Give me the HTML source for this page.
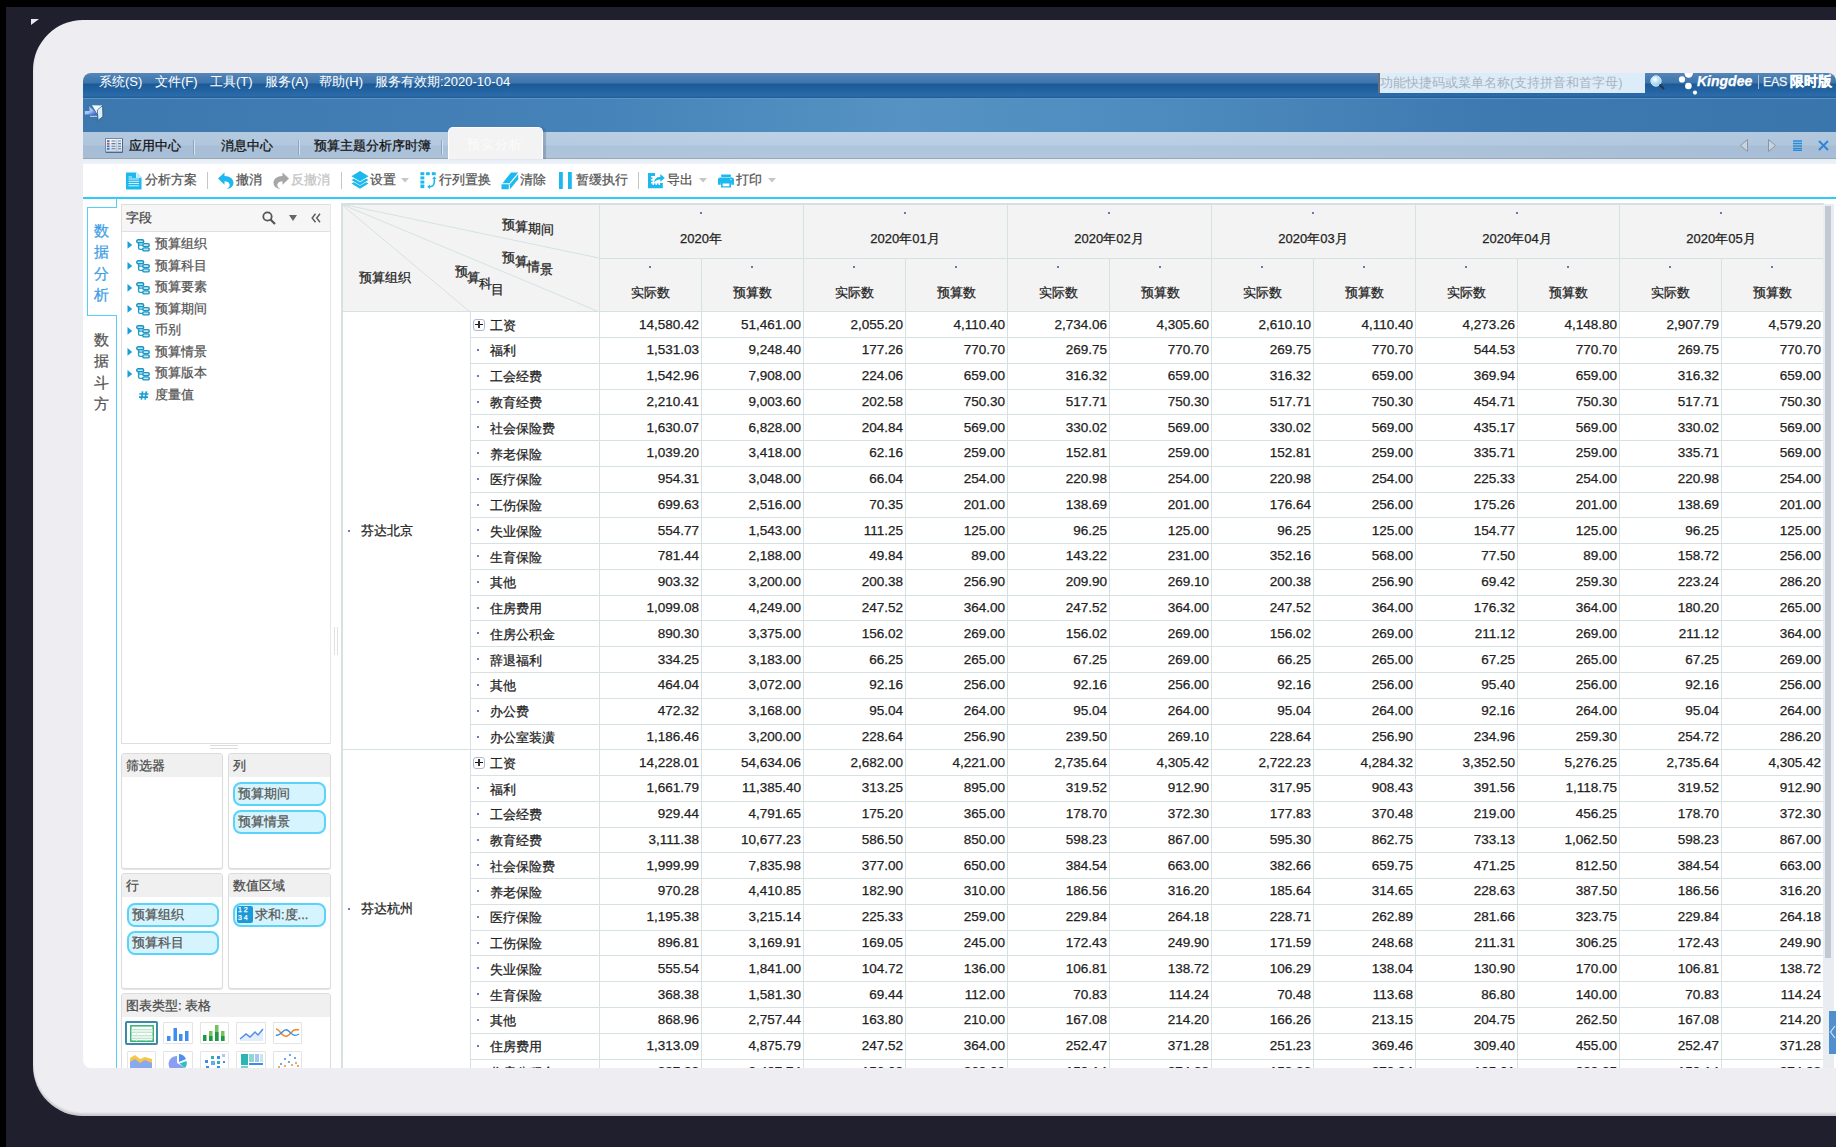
<!DOCTYPE html><html><head><meta charset="utf-8"><style>
*{margin:0;padding:0;box-sizing:border-box}
html,body{width:1836px;height:1147px;overflow:hidden;background:#1f1f2d;font-family:"Liberation Sans",sans-serif;-webkit-text-stroke:0.25px currentColor}
.abs{position:absolute}
#topblk{position:absolute;left:0;top:0;width:1836px;height:7px;background:#000}
#leftblk{position:absolute;left:0;top:0;width:6px;height:1147px;background:#000}
#panel{position:absolute;left:33px;top:20px;width:1900px;height:1095.5px;background:#eeedf2;border-radius:50px;box-shadow:inset 0 -2.5px 2px rgba(60,60,70,.2)}
#tri{position:absolute;left:31px;top:19px;width:0;height:0;border-top:6px solid #e8e8ee;border-right:8px solid transparent}
#app{position:absolute;left:83px;top:73px;width:1753px;height:995px;background:#fff;border-radius:8px 8px 0 8px;overflow:hidden}
#menubar{position:absolute;left:0;top:0;width:1800px;height:25px;background:linear-gradient(#5787b8 0px,#4a7eb2 4px,#3c74ac 10px,#1c5a96 11px,#2262a0 17px,#2c6cab 23px,#21609b 24px,#21609b 25px)}
#menubar .m{position:absolute;top:0px;-webkit-text-stroke:0;color:#fff;font-size:13px;line-height:17px;white-space:nowrap}
#mline{position:absolute;left:0;top:25px;width:1800px;height:1px;background:#5b93c3}
#bar2{position:absolute;left:0;top:26px;width:1753px;height:33px;background:linear-gradient(90deg,#3c77ad 0%,#4683b8 30%,#5693c4 47%,#4d8abe 62%,#3e7aaf 80%,#3a76ac 100%)}
#tabbar{position:absolute;left:0;top:59px;width:1753px;height:26px;background:linear-gradient(#bcd1e5 0,#b9cee3 13px,#afc5dc 14px,#b0c7dd 25px)}#tabbar:after{content:'';position:absolute;left:0;top:0;right:0;bottom:0;background:linear-gradient(90deg,rgba(60,90,130,.08),rgba(255,255,255,0) 40%,rgba(255,255,255,0) 60%,rgba(60,90,130,.08))}
#tabline{position:absolute;left:0;top:85px;width:1800px;height:1px;background:#9aa6b2}
#strip{position:absolute;left:0;top:86px;width:1800px;height:5px;background:linear-gradient(#e6edf5,#edf2f8)}
.tab{position:absolute;top:65px;font-size:13px;line-height:16px;color:#111;white-space:nowrap}
.tsep{position:absolute;top:67px;width:1px;height:15px;background:#8ea5bc;box-shadow:1px 0 0 #d5e2ee}
#acttab{position:absolute;left:365px;top:54px;width:95px;height:32px;background:#f3f3f3;border:1.5px solid #fff;border-bottom:none;border-radius:5px 5px 0 0;box-shadow:3px 0 1px rgba(70,90,120,.3)}
#acttab span{-webkit-text-stroke:0;position:absolute;left:17.5px;top:8.5px;font-size:13px;line-height:16px;color:#fbfbfb;letter-spacing:1px}
#toolbar{position:absolute;left:0;top:91px;width:1800px;height:33px;background:#fff}
.tb{position:absolute;top:8px;font-size:13px;line-height:16px;color:#555;white-space:nowrap}
.tbsep{position:absolute;top:8px;width:1px;height:17px;background:#bdbdbd}
#cyan{position:absolute;left:-1px;top:123.6px;width:1800px;height:2px;background:#2ccbfc}
</style></head><body>
<div id="topblk"></div><div id="leftblk"></div>
<div id="panel"></div><div id="tri"></div>
<div id="app">
<div id="menubar">
<div class="m" style="left:16px">系统(S)</div>
<div class="m" style="left:72px">文件(F)</div>
<div class="m" style="left:127px">工具(T)</div>
<div class="m" style="left:182px">服务(A)</div>
<div class="m" style="left:236px">帮助(H)</div>
<div class="m" style="left:292px">服务有效期:2020-10-04</div>
</div><div id="mline"></div><div id="bar2"></div>
<div id="tabbar"></div><div id="tabline"></div><div id="strip"></div>
<svg class="abs" style="left:22px;top:65px" width="18" height="15" viewBox="0 0 18 15"><defs><linearGradient id="tg" x1="0" y1="0" x2="0" y2="1"><stop offset="0" stop-color="#f4f8fd"/><stop offset="1" stop-color="#c9d9eb"/></linearGradient></defs><rect x="0.5" y="0.5" width="17" height="13.5" fill="url(#tg)" stroke="#7388aa" stroke-width="1"/><path d="M17.5 1V14.5H1" stroke="#55667f" stroke-width="1" fill="none"/><rect x="2" y="2.2" width="2.5" height="1.8" fill="#3a78c8"/><rect x="2" y="4.8" width="2.5" height="1.8" fill="#e8402a"/><rect x="2" y="7.4" width="2.5" height="1.8" fill="#3a78c8"/><rect x="2" y="10" width="2.5" height="1.8" fill="#3a78c8"/><path d="M6.5 3H10.5M6.5 5.6H10.5M6.5 8.2H10.5M6.5 10.8H10.5M13 3H16M13 5.6H16M13 8.2H16M13 10.8H16" stroke="#6a7a94" stroke-width="1.1"/><path d="M11.8 1.5V13" stroke="#9fb2cc" stroke-width="0.8"/></svg>
<div class="tab" style="left:46px">应用中心</div>
<div class="tsep" style="left:110px"></div>
<div class="tab" style="left:138px">消息中心</div>
<div class="tsep" style="left:215px"></div>
<div class="tab" style="left:231px">预算主题分析序时簿</div>
<div class="tsep" style="left:358px"></div>
<div id="acttab"><span>预实分析</span></div>
<div id="toolbar"></div><div id="cyan"></div>
<svg class="abs" style="left:43px;top:98.5px" width="16" height="18" viewBox="0 0 16 18"><path d="M0 0.5H10.5L15.5 5.5V17.5H0Z" fill="#1cb9ef"/><path d="M10 0.5V5.8H15.5Z" fill="#fff"/><path d="M10.5 1.2L14.8 5.5H10.5Z" fill="#bfeafc"/><path d="M2.5 5H6M2.5 7H13M2.5 9.3H13M2.5 11.5H13M2.5 13.8H13" stroke="#d8f3fe" stroke-width="1"/></svg>
<div class="abs" style="left:62px;top:99px;font-size:13px;line-height:16px;color:#555;white-space:nowrap">分析方案</div>
<div class="abs" style="left:124px;top:99px;width:1px;height:17px;background:#c6c6c6"></div>
<svg class="abs" style="left:134.5px;top:98.5px" width="16" height="17.5" viewBox="0 0 16 17.5"><path d="M0 6.5L6.5 0.5V4C12 4 15.5 7 15.5 11C15.5 14 13 16.5 8.5 17.2C11.5 15.5 12 13.5 11.5 12C10.8 10 9 9.2 6.5 9.2V12.8Z" fill="#1cb9ef"/></svg>
<div class="abs" style="left:153px;top:99px;font-size:13px;line-height:16px;color:#555;white-space:nowrap">撤消</div>
<svg class="abs" style="left:190px;top:98.5px" width="16" height="17.5" viewBox="0 0 16 17.5"><path d="M16 6.5L9.5 0.5V4C4 4 0.5 7 0.5 11C0.5 14 3 16.5 7.5 17.2C4.5 15.5 4 13.5 4.5 12C5.2 10 7 9.2 9.5 9.2V12.8Z" fill="#a6a6a6"/></svg>
<div class="abs" style="left:208px;top:99px;font-size:13px;line-height:16px;color:#c4c4c4;white-space:nowrap">反撤消</div>
<div class="abs" style="left:258px;top:99px;width:1px;height:17px;background:#c6c6c6"></div>
<svg class="abs" style="left:267.5px;top:98.30000000000001px" width="18" height="18" viewBox="0 0 18 18"><path d="M9 0L17.5 5.2L9 10.4L0.5 5.2Z" fill="#1cb9ef"/><path d="M0.5 8.2L3 6.8L9 10.4L15 6.8L17.5 8.2L9 13.4Z" fill="#1cb9ef" transform="translate(0,0.9)"/><path d="M0.5 8.2L3 6.8L9 10.4L15 6.8L17.5 8.2L9 13.4Z" fill="#1cb9ef" transform="translate(0,4.4)"/></svg>
<div class="abs" style="left:287px;top:99px;font-size:13px;line-height:16px;color:#555;white-space:nowrap">设置</div>
<svg class="abs" style="left:318px;top:105.19999999999999px" width="8" height="4.5" viewBox="0 0 8 4.5"><path d="M0 0H8L4 4.5Z" fill="#c6c6c6"/></svg>
<svg class="abs" style="left:337px;top:98.5px" width="17" height="17" viewBox="0 0 17 17"><g fill="#1cb9ef"><rect x="0.4" y="0.2" width="3.9" height="3"/><rect x="6.1" y="0.2" width="3.6" height="3"/><rect x="11.8" y="0.2" width="3.9" height="3"/><rect x="0.4" y="4.4" width="3.9" height="3"/><rect x="0.4" y="8.6" width="3.9" height="3"/><rect x="0.4" y="12.5" width="3.9" height="3.6"/></g><path d="M9 14.8Q14.3 14.8 14.3 9.5V6" stroke="#1cb9ef" stroke-width="1.6" fill="none"/><path d="M12.2 7L14.3 4.2L16.4 7Z M10 12.6L7.2 14.8L10 17Z" fill="#1cb9ef"/></svg>
<div class="abs" style="left:356px;top:99px;font-size:13px;line-height:16px;color:#555;white-space:nowrap">行列置换</div>
<svg class="abs" style="left:418px;top:98.5px" width="18" height="18" viewBox="0 0 18 18"><path d="M1.5 11.2L10 0.5H17.2L8.3 11.2Z" fill="#1cb9ef"/><path d="M0.5 12.3H7.8V17.3H0.5Z" fill="#1cb9ef"/><path d="M8.8 12.3L17.2 2.5V7.2L9 17.2Z" fill="#1cb9ef"/></svg>
<div class="abs" style="left:437px;top:99px;font-size:13px;line-height:16px;color:#555;white-space:nowrap">清除</div>
<svg class="abs" style="left:476px;top:99px" width="13" height="17" viewBox="0 0 13 17"><rect x="0" y="0" width="3.8" height="17" fill="#1cb9ef"/><rect x="9" y="0" width="3.8" height="17" fill="#1cb9ef"/></svg>
<div class="abs" style="left:493px;top:99px;font-size:13px;line-height:16px;color:#555;white-space:nowrap">暂缓执行</div>
<div class="abs" style="left:555px;top:99px;width:1px;height:17px;background:#c6c6c6"></div>
<svg class="abs" style="left:565px;top:99.5px" width="17" height="16" viewBox="0 0 17 16"><path d="M0 0H7V3H3V4.5H4.5V6H3V7.5H4.5V9H3V10.5H4.5V12H6V10.5H7.5V12H9V10.5H10.5V12H12V10H14.8V15.2H0Z" fill="#1cb9ef"/><path d="M6 9.5C6.5 6 8.5 4 12.3 4V1L16.8 5L12.3 8.8V6.5C9.5 6.5 7.5 7.5 6 9.5Z" fill="#1cb9ef"/></svg>
<div class="abs" style="left:584px;top:99px;font-size:13px;line-height:16px;color:#555;white-space:nowrap">导出</div>
<svg class="abs" style="left:615.5px;top:105.19999999999999px" width="8" height="4.5" viewBox="0 0 8 4.5"><path d="M0 0H8L4 4.5Z" fill="#c6c6c6"/></svg>
<svg class="abs" style="left:634.5px;top:100.5px" width="16" height="14" viewBox="0 0 16 14"><rect x="3" y="0.5" width="10" height="2.6" rx="1" fill="#1cb9ef"/><path d="M2 3.5H14Q16 3.5 16 5.5V10.8H13.2V8.6H2.8V10.8H0V5.5Q0 3.5 2 3.5Z" fill="#1cb9ef"/><path d="M3 7.8H13V13.5H3Z" fill="#1cb9ef"/><path d="M4.6 9.4H11.4V12.2H4.6Z" fill="#fff"/><circle cx="13" cy="5.6" r="0.7" fill="#fff"/></svg>
<div class="abs" style="left:653px;top:99px;font-size:13px;line-height:16px;color:#555;white-space:nowrap">打印</div>
<svg class="abs" style="left:684.5px;top:105.19999999999999px" width="8" height="4.5" viewBox="0 0 8 4.5"><path d="M0 0H8L4 4.5Z" fill="#c6c6c6"/></svg>
<div class="abs" style="left:33px;top:125px;width:1.2px;height:10px;background:#55cffa"></div>
<div class="abs" style="left:4px;top:134.2px;width:30px;height:1.2px;background:#55cffa"></div>
<div class="abs" style="left:4px;top:134.2px;width:1.2px;height:109px;background:#55cffa"></div>
<div class="abs" style="left:4px;top:242px;width:30px;height:1.2px;background:#55cffa"></div>
<div class="abs" style="left:33px;top:242px;width:1.2px;height:760px;background:#55cffa"></div>
<div class="abs" style="left:11px;top:150.0px;font-size:15px;line-height:16px;color:#3d9de6">数</div>
<div class="abs" style="left:11px;top:171.4px;font-size:15px;line-height:16px;color:#3d9de6">据</div>
<div class="abs" style="left:11px;top:192.8px;font-size:15px;line-height:16px;color:#3d9de6">分</div>
<div class="abs" style="left:11px;top:214.2px;font-size:15px;line-height:16px;color:#3d9de6">析</div>
<div class="abs" style="left:11px;top:259.0px;font-size:15px;line-height:16px;color:#555">数</div>
<div class="abs" style="left:11px;top:280.4px;font-size:15px;line-height:16px;color:#555">据</div>
<div class="abs" style="left:11px;top:301.8px;font-size:15px;line-height:16px;color:#555">斗</div>
<div class="abs" style="left:11px;top:323.2px;font-size:15px;line-height:16px;color:#555">方</div>
<div class="abs" style="left:38px;top:130.5px;width:210px;height:540.5px;border:1px solid #dedede;background:#fff"></div>
<div class="abs" style="left:39px;top:132px;width:208px;height:27px;background:#f6f6f6;border-bottom:1px solid #e0e0e0"></div>
<div class="abs" style="left:43px;top:137px;font-size:13px;line-height:16px;color:#444;white-space:nowrap">字段</div>
<svg class="abs" style="left:179px;top:138px" width="14" height="14" viewBox="0 0 14 14"><circle cx="5.5" cy="5.5" r="4.2" fill="none" stroke="#555" stroke-width="1.8"/><path d="M8.5 8.5L13 13" stroke="#555" stroke-width="2.2"/></svg>
<svg class="abs" style="left:206px;top:142px" width="8" height="6" viewBox="0 0 8 6"><path d="M0 0H8L4 6Z" fill="#666"/></svg>
<svg class="abs" style="left:228px;top:140px" width="10" height="10" viewBox="0 0 10 10"><path d="M4.5 0.8L1.2 5L4.5 9.2M9 0.8L5.7 5L9 9.2" stroke="#5f5f5f" stroke-width="1.5" fill="none"/></svg>
<svg class="abs" style="left:44px;top:167.79999999999998px" width="6" height="8" viewBox="0 0 6 8"><path d="M0.5 0L5.2 3.9L0.5 7.8Z" fill="#1a9fd6"/></svg>
<svg class="abs" style="left:53px;top:165.9px" width="14" height="13" viewBox="0 0 14 13"><rect x="0.7" y="0.7" width="7" height="3" rx="1.5" fill="#c5e6f3" stroke="#1a94c4" stroke-width="1.4"/><rect x="6.7" y="4.6" width="6.6" height="3" rx="1.5" fill="#c5e6f3" stroke="#1a94c4" stroke-width="1.4"/><rect x="6.7" y="8.9" width="6.6" height="3" rx="1.5" fill="#c5e6f3" stroke="#1a94c4" stroke-width="1.4"/><path d="M2.6 3.6V9Q2.6 10.4 4.2 10.4H6.8M2.6 5Q2.6 6.1 4.2 6.1H6.8" stroke="#1e9cc8" stroke-width="1.4" fill="none"/></svg>
<div class="abs" style="left:72px;top:163.1px;font-size:13px;line-height:16px;color:#555;white-space:nowrap">预算组织</div>
<svg class="abs" style="left:44px;top:189.3px" width="6" height="8" viewBox="0 0 6 8"><path d="M0.5 0L5.2 3.9L0.5 7.8Z" fill="#1a9fd6"/></svg>
<svg class="abs" style="left:53px;top:187.40000000000003px" width="14" height="13" viewBox="0 0 14 13"><rect x="0.7" y="0.7" width="7" height="3" rx="1.5" fill="#c5e6f3" stroke="#1a94c4" stroke-width="1.4"/><rect x="6.7" y="4.6" width="6.6" height="3" rx="1.5" fill="#c5e6f3" stroke="#1a94c4" stroke-width="1.4"/><rect x="6.7" y="8.9" width="6.6" height="3" rx="1.5" fill="#c5e6f3" stroke="#1a94c4" stroke-width="1.4"/><path d="M2.6 3.6V9Q2.6 10.4 4.2 10.4H6.8M2.6 5Q2.6 6.1 4.2 6.1H6.8" stroke="#1e9cc8" stroke-width="1.4" fill="none"/></svg>
<div class="abs" style="left:72px;top:184.60000000000002px;font-size:13px;line-height:16px;color:#555;white-space:nowrap">预算科目</div>
<svg class="abs" style="left:44px;top:210.8px" width="6" height="8" viewBox="0 0 6 8"><path d="M0.5 0L5.2 3.9L0.5 7.8Z" fill="#1a9fd6"/></svg>
<svg class="abs" style="left:53px;top:208.90000000000003px" width="14" height="13" viewBox="0 0 14 13"><rect x="0.7" y="0.7" width="7" height="3" rx="1.5" fill="#c5e6f3" stroke="#1a94c4" stroke-width="1.4"/><rect x="6.7" y="4.6" width="6.6" height="3" rx="1.5" fill="#c5e6f3" stroke="#1a94c4" stroke-width="1.4"/><rect x="6.7" y="8.9" width="6.6" height="3" rx="1.5" fill="#c5e6f3" stroke="#1a94c4" stroke-width="1.4"/><path d="M2.6 3.6V9Q2.6 10.4 4.2 10.4H6.8M2.6 5Q2.6 6.1 4.2 6.1H6.8" stroke="#1e9cc8" stroke-width="1.4" fill="none"/></svg>
<div class="abs" style="left:72px;top:206.10000000000002px;font-size:13px;line-height:16px;color:#555;white-space:nowrap">预算要素</div>
<svg class="abs" style="left:44px;top:232.3px" width="6" height="8" viewBox="0 0 6 8"><path d="M0.5 0L5.2 3.9L0.5 7.8Z" fill="#1a9fd6"/></svg>
<svg class="abs" style="left:53px;top:230.40000000000003px" width="14" height="13" viewBox="0 0 14 13"><rect x="0.7" y="0.7" width="7" height="3" rx="1.5" fill="#c5e6f3" stroke="#1a94c4" stroke-width="1.4"/><rect x="6.7" y="4.6" width="6.6" height="3" rx="1.5" fill="#c5e6f3" stroke="#1a94c4" stroke-width="1.4"/><rect x="6.7" y="8.9" width="6.6" height="3" rx="1.5" fill="#c5e6f3" stroke="#1a94c4" stroke-width="1.4"/><path d="M2.6 3.6V9Q2.6 10.4 4.2 10.4H6.8M2.6 5Q2.6 6.1 4.2 6.1H6.8" stroke="#1e9cc8" stroke-width="1.4" fill="none"/></svg>
<div class="abs" style="left:72px;top:227.60000000000002px;font-size:13px;line-height:16px;color:#555;white-space:nowrap">预算期间</div>
<svg class="abs" style="left:44px;top:253.8px" width="6" height="8" viewBox="0 0 6 8"><path d="M0.5 0L5.2 3.9L0.5 7.8Z" fill="#1a9fd6"/></svg>
<svg class="abs" style="left:53px;top:251.90000000000003px" width="14" height="13" viewBox="0 0 14 13"><rect x="0.7" y="0.7" width="7" height="3" rx="1.5" fill="#c5e6f3" stroke="#1a94c4" stroke-width="1.4"/><rect x="6.7" y="4.6" width="6.6" height="3" rx="1.5" fill="#c5e6f3" stroke="#1a94c4" stroke-width="1.4"/><rect x="6.7" y="8.9" width="6.6" height="3" rx="1.5" fill="#c5e6f3" stroke="#1a94c4" stroke-width="1.4"/><path d="M2.6 3.6V9Q2.6 10.4 4.2 10.4H6.8M2.6 5Q2.6 6.1 4.2 6.1H6.8" stroke="#1e9cc8" stroke-width="1.4" fill="none"/></svg>
<div class="abs" style="left:72px;top:249.10000000000002px;font-size:13px;line-height:16px;color:#555;white-space:nowrap">币别</div>
<svg class="abs" style="left:44px;top:275.3px" width="6" height="8" viewBox="0 0 6 8"><path d="M0.5 0L5.2 3.9L0.5 7.8Z" fill="#1a9fd6"/></svg>
<svg class="abs" style="left:53px;top:273.40000000000003px" width="14" height="13" viewBox="0 0 14 13"><rect x="0.7" y="0.7" width="7" height="3" rx="1.5" fill="#c5e6f3" stroke="#1a94c4" stroke-width="1.4"/><rect x="6.7" y="4.6" width="6.6" height="3" rx="1.5" fill="#c5e6f3" stroke="#1a94c4" stroke-width="1.4"/><rect x="6.7" y="8.9" width="6.6" height="3" rx="1.5" fill="#c5e6f3" stroke="#1a94c4" stroke-width="1.4"/><path d="M2.6 3.6V9Q2.6 10.4 4.2 10.4H6.8M2.6 5Q2.6 6.1 4.2 6.1H6.8" stroke="#1e9cc8" stroke-width="1.4" fill="none"/></svg>
<div class="abs" style="left:72px;top:270.6px;font-size:13px;line-height:16px;color:#555;white-space:nowrap">预算情景</div>
<svg class="abs" style="left:44px;top:296.8px" width="6" height="8" viewBox="0 0 6 8"><path d="M0.5 0L5.2 3.9L0.5 7.8Z" fill="#1a9fd6"/></svg>
<svg class="abs" style="left:53px;top:294.90000000000003px" width="14" height="13" viewBox="0 0 14 13"><rect x="0.7" y="0.7" width="7" height="3" rx="1.5" fill="#c5e6f3" stroke="#1a94c4" stroke-width="1.4"/><rect x="6.7" y="4.6" width="6.6" height="3" rx="1.5" fill="#c5e6f3" stroke="#1a94c4" stroke-width="1.4"/><rect x="6.7" y="8.9" width="6.6" height="3" rx="1.5" fill="#c5e6f3" stroke="#1a94c4" stroke-width="1.4"/><path d="M2.6 3.6V9Q2.6 10.4 4.2 10.4H6.8M2.6 5Q2.6 6.1 4.2 6.1H6.8" stroke="#1e9cc8" stroke-width="1.4" fill="none"/></svg>
<div class="abs" style="left:72px;top:292.1px;font-size:13px;line-height:16px;color:#555;white-space:nowrap">预算版本</div>
<svg class="abs" style="left:56px;top:318.0px" width="10" height="9" viewBox="0 0 10 9"><path d="M3.6 0.3L2.4 8.7M7.3 0.3L6.1 8.7M0.3 3H9.4M0 6.2H9" stroke="#1aa0d2" stroke-width="1.7" fill="none"/></svg>
<div class="abs" style="left:72px;top:313.6px;font-size:13px;line-height:16px;color:#555;white-space:nowrap">度量值</div>
<div class="abs" style="left:127px;top:672px;width:28px;height:1px;background:#dcdcdc"></div>
<div class="abs" style="left:127px;top:675px;width:28px;height:1px;background:#dcdcdc"></div>
<div class="abs" style="left:247px;top:131px;width:1px;height:540px;background:#e6e6e6"></div>
<div class="abs" style="left:251px;top:554px;width:1px;height:28px;background:#e0e0e0"></div>
<div class="abs" style="left:254px;top:554px;width:1px;height:28px;background:#e0e0e0"></div>
<div class="abs" style="left:38px;top:680px;width:102px;height:116px;border:1px solid #dcdcdc;border-radius:3px;background:#fff;box-shadow:0 1px 1px #e4e4e4"></div>
<div class="abs" style="left:39px;top:681px;width:100px;height:23px;background:#f0f0f0;border-radius:2px 2px 0 0"></div>
<div class="abs" style="left:43px;top:685px;font-size:13px;line-height:16px;color:#4a4a4a">筛选器</div>
<div class="abs" style="left:145px;top:680px;width:103px;height:116px;border:1px solid #dcdcdc;border-radius:3px;background:#fff;box-shadow:0 1px 1px #e4e4e4"></div>
<div class="abs" style="left:146px;top:681px;width:101px;height:23px;background:#f0f0f0;border-radius:2px 2px 0 0"></div>
<div class="abs" style="left:150px;top:685px;font-size:13px;line-height:16px;color:#4a4a4a">列</div>
<div class="abs" style="left:150px;top:709px;width:93px;height:23.5px;border:2px solid #5ad3fb;border-radius:8px;background:#d5f4fd"></div>
<div class="abs" style="left:155px;top:713px;font-size:13px;line-height:16px;color:#555">预算期间</div>
<div class="abs" style="left:150px;top:737px;width:93px;height:23.5px;border:2px solid #5ad3fb;border-radius:8px;background:#d5f4fd"></div>
<div class="abs" style="left:155px;top:741px;font-size:13px;line-height:16px;color:#555">预算情景</div>
<div class="abs" style="left:38px;top:800px;width:102px;height:116px;border:1px solid #dcdcdc;border-radius:3px;background:#fff;box-shadow:0 1px 1px #e4e4e4"></div>
<div class="abs" style="left:39px;top:801px;width:100px;height:23px;background:#f0f0f0;border-radius:2px 2px 0 0"></div>
<div class="abs" style="left:43px;top:805px;font-size:13px;line-height:16px;color:#4a4a4a">行</div>
<div class="abs" style="left:145px;top:800px;width:103px;height:116px;border:1px solid #dcdcdc;border-radius:3px;background:#fff;box-shadow:0 1px 1px #e4e4e4"></div>
<div class="abs" style="left:146px;top:801px;width:101px;height:23px;background:#f0f0f0;border-radius:2px 2px 0 0"></div>
<div class="abs" style="left:150px;top:805px;font-size:13px;line-height:16px;color:#4a4a4a">数值区域</div>
<div class="abs" style="left:44px;top:830px;width:92px;height:23.5px;border:2px solid #5ad3fb;border-radius:8px;background:#d5f4fd"></div>
<div class="abs" style="left:49px;top:834px;font-size:13px;line-height:16px;color:#555">预算组织</div>
<div class="abs" style="left:44px;top:858px;width:92px;height:23.5px;border:2px solid #5ad3fb;border-radius:8px;background:#d5f4fd"></div>
<div class="abs" style="left:49px;top:862px;font-size:13px;line-height:16px;color:#555">预算科目</div>
<div class="abs" style="left:150px;top:830px;width:93px;height:23.5px;border:2px solid #5ad3fb;border-radius:8px;background:#d5f4fd"></div>
<div class="abs" style="left:154px;top:833px;width:16px;height:17px;background:#1a98d8;border-radius:2px"></div>
<div class="abs" style="left:155px;top:833px;font-size:7px;line-height:8px;color:#fff;width:14px">1 2<br>3 4</div>
<div class="abs" style="left:172px;top:834px;font-size:13px;line-height:16px;color:#555">求和:度...</div>
<div class="abs" style="left:38px;top:920px;width:210px;height:120px;border:1px solid #dcdcdc;border-radius:3px;background:#fff;box-shadow:0 1px 1px #e4e4e4"></div>
<div class="abs" style="left:39px;top:921px;width:208px;height:23px;background:#f0f0f0;border-radius:2px 2px 0 0"></div>
<div class="abs" style="left:43px;top:925px;font-size:13px;line-height:16px;color:#4a4a4a">图表类型: 表格</div>
<div class="abs" style="left:258px;top:131px;width:1482px;height:107.19999999999999px;background:#f3f3f3"></div>
<div class="abs" style="left:258px;top:130px;width:1483px;height:2px;background:#d8dfdf"></div>
<div class="abs" style="left:258px;top:131px;width:1.5px;height:864px;background:#d6e1e1"></div>
<svg class="abs" style="left:258px;top:131px" width="258" height="108" viewBox="0 0 258 108"><path d="M0 0L258 54M0 0L258 107.8M0 0L129 107.8" stroke="#d4e2e2" stroke-width="1" fill="none"/></svg>
<div class="abs" style="left:419px;top:145px;font-size:13px;line-height:13px;color:#222">预</div>
<div class="abs" style="left:432px;top:147px;font-size:13px;line-height:13px;color:#222">算</div>
<div class="abs" style="left:444.5px;top:148.5px;font-size:13px;line-height:13px;color:#222">期</div>
<div class="abs" style="left:457.5px;top:149.5px;font-size:13px;line-height:13px;color:#222">间</div>
<div class="abs" style="left:419px;top:178px;font-size:13px;line-height:13px;color:#222">预</div>
<div class="abs" style="left:432px;top:182px;font-size:13px;line-height:13px;color:#222">算</div>
<div class="abs" style="left:444px;top:187px;font-size:13px;line-height:13px;color:#222">情</div>
<div class="abs" style="left:456.5px;top:190px;font-size:13px;line-height:13px;color:#222">景</div>
<div class="abs" style="left:371.5px;top:192px;font-size:13px;line-height:13px;color:#222">预</div>
<div class="abs" style="left:383.5px;top:197.5px;font-size:13px;line-height:13px;color:#222">算</div>
<div class="abs" style="left:395.5px;top:204px;font-size:13px;line-height:13px;color:#222">科</div>
<div class="abs" style="left:407.5px;top:210px;font-size:13px;line-height:13px;color:#222">目</div>
<div class="abs" style="left:276px;top:197px;font-size:13px;line-height:16px;color:#222;white-space:nowrap">预算组织</div>
<div class="abs" style="left:516px;top:131px;width:1px;height:864px;background:#d6e1e1"></div>
<div class="abs" style="left:617px;top:138.5px;width:2px;height:2px;background:#6a78b4"></div>
<div class="abs" style="left:516px;top:158px;width:204px;text-align:center;font-size:13px;line-height:16px;color:#222">2020年</div>
<div class="abs" style="left:566px;top:192.5px;width:2px;height:2px;background:#6a78b4"></div>
<div class="abs" style="left:516px;top:212.3px;width:102px;text-align:center;font-size:13px;line-height:16px;color:#222">实际数</div>
<div class="abs" style="left:668px;top:192.5px;width:2px;height:2px;background:#6a78b4"></div>
<div class="abs" style="left:618px;top:212.3px;width:102px;text-align:center;font-size:13px;line-height:16px;color:#222">预算数</div>
<div class="abs" style="left:618px;top:185px;width:1px;height:810px;background:#d6e1e1"></div>
<div class="abs" style="left:720px;top:131px;width:1px;height:864px;background:#d6e1e1"></div>
<div class="abs" style="left:821px;top:138.5px;width:2px;height:2px;background:#6a78b4"></div>
<div class="abs" style="left:720px;top:158px;width:204px;text-align:center;font-size:13px;line-height:16px;color:#222">2020年01月</div>
<div class="abs" style="left:770px;top:192.5px;width:2px;height:2px;background:#6a78b4"></div>
<div class="abs" style="left:720px;top:212.3px;width:102px;text-align:center;font-size:13px;line-height:16px;color:#222">实际数</div>
<div class="abs" style="left:872px;top:192.5px;width:2px;height:2px;background:#6a78b4"></div>
<div class="abs" style="left:822px;top:212.3px;width:102px;text-align:center;font-size:13px;line-height:16px;color:#222">预算数</div>
<div class="abs" style="left:822px;top:185px;width:1px;height:810px;background:#d6e1e1"></div>
<div class="abs" style="left:924px;top:131px;width:1px;height:864px;background:#d6e1e1"></div>
<div class="abs" style="left:1025px;top:138.5px;width:2px;height:2px;background:#6a78b4"></div>
<div class="abs" style="left:924px;top:158px;width:204px;text-align:center;font-size:13px;line-height:16px;color:#222">2020年02月</div>
<div class="abs" style="left:974px;top:192.5px;width:2px;height:2px;background:#6a78b4"></div>
<div class="abs" style="left:924px;top:212.3px;width:102px;text-align:center;font-size:13px;line-height:16px;color:#222">实际数</div>
<div class="abs" style="left:1076px;top:192.5px;width:2px;height:2px;background:#6a78b4"></div>
<div class="abs" style="left:1026px;top:212.3px;width:102px;text-align:center;font-size:13px;line-height:16px;color:#222">预算数</div>
<div class="abs" style="left:1026px;top:185px;width:1px;height:810px;background:#d6e1e1"></div>
<div class="abs" style="left:1128px;top:131px;width:1px;height:864px;background:#d6e1e1"></div>
<div class="abs" style="left:1229px;top:138.5px;width:2px;height:2px;background:#6a78b4"></div>
<div class="abs" style="left:1128px;top:158px;width:204px;text-align:center;font-size:13px;line-height:16px;color:#222">2020年03月</div>
<div class="abs" style="left:1178px;top:192.5px;width:2px;height:2px;background:#6a78b4"></div>
<div class="abs" style="left:1128px;top:212.3px;width:102px;text-align:center;font-size:13px;line-height:16px;color:#222">实际数</div>
<div class="abs" style="left:1280px;top:192.5px;width:2px;height:2px;background:#6a78b4"></div>
<div class="abs" style="left:1230px;top:212.3px;width:102px;text-align:center;font-size:13px;line-height:16px;color:#222">预算数</div>
<div class="abs" style="left:1230px;top:185px;width:1px;height:810px;background:#d6e1e1"></div>
<div class="abs" style="left:1332px;top:131px;width:1px;height:864px;background:#d6e1e1"></div>
<div class="abs" style="left:1433px;top:138.5px;width:2px;height:2px;background:#6a78b4"></div>
<div class="abs" style="left:1332px;top:158px;width:204px;text-align:center;font-size:13px;line-height:16px;color:#222">2020年04月</div>
<div class="abs" style="left:1382px;top:192.5px;width:2px;height:2px;background:#6a78b4"></div>
<div class="abs" style="left:1332px;top:212.3px;width:102px;text-align:center;font-size:13px;line-height:16px;color:#222">实际数</div>
<div class="abs" style="left:1484px;top:192.5px;width:2px;height:2px;background:#6a78b4"></div>
<div class="abs" style="left:1434px;top:212.3px;width:102px;text-align:center;font-size:13px;line-height:16px;color:#222">预算数</div>
<div class="abs" style="left:1434px;top:185px;width:1px;height:810px;background:#d6e1e1"></div>
<div class="abs" style="left:1536px;top:131px;width:1px;height:864px;background:#d6e1e1"></div>
<div class="abs" style="left:1637px;top:138.5px;width:2px;height:2px;background:#6a78b4"></div>
<div class="abs" style="left:1536px;top:158px;width:204px;text-align:center;font-size:13px;line-height:16px;color:#222">2020年05月</div>
<div class="abs" style="left:1586px;top:192.5px;width:2px;height:2px;background:#6a78b4"></div>
<div class="abs" style="left:1536px;top:212.3px;width:102px;text-align:center;font-size:13px;line-height:16px;color:#222">实际数</div>
<div class="abs" style="left:1688px;top:192.5px;width:2px;height:2px;background:#6a78b4"></div>
<div class="abs" style="left:1638px;top:212.3px;width:102px;text-align:center;font-size:13px;line-height:16px;color:#222">预算数</div>
<div class="abs" style="left:1638px;top:185px;width:1px;height:810px;background:#d6e1e1"></div>
<div class="abs" style="left:1740px;top:131px;width:1px;height:864px;background:#d6e1e1"></div>
<div class="abs" style="left:516px;top:185px;width:1224px;height:1px;background:#d6e1e1"></div>
<div class="abs" style="left:258px;top:238.2px;width:1482px;height:1px;background:#d6e1e1"></div>
<div class="abs" style="left:387px;top:238.2px;width:1px;height:756.8px;background:#d6e1e1"></div>
<div class="abs" style="left:390px;top:245.89999999999998px;width:12px;height:12px;border:1px solid #a9b9d8;border-radius:3px;background:#fff"></div>
<div class="abs" style="left:392px;top:250.95px;width:8px;height:1.3px;background:#111"></div>
<div class="abs" style="left:395.35px;top:248.0px;width:1.3px;height:7.3px;background:#333"></div>
<div class="abs" style="left:407px;top:244.7px;font-size:13px;line-height:16px;color:#222;white-space:nowrap">工资</div>
<div class="abs" style="left:516px;top:243.5px;width:100px;text-align:right;font-size:13.5px;line-height:16px;color:#222">14,580.42</div>
<div class="abs" style="left:618px;top:243.5px;width:100px;text-align:right;font-size:13.5px;line-height:16px;color:#222">51,461.00</div>
<div class="abs" style="left:720px;top:243.5px;width:100px;text-align:right;font-size:13.5px;line-height:16px;color:#222">2,055.20</div>
<div class="abs" style="left:822px;top:243.5px;width:100px;text-align:right;font-size:13.5px;line-height:16px;color:#222">4,110.40</div>
<div class="abs" style="left:924px;top:243.5px;width:100px;text-align:right;font-size:13.5px;line-height:16px;color:#222">2,734.06</div>
<div class="abs" style="left:1026px;top:243.5px;width:100px;text-align:right;font-size:13.5px;line-height:16px;color:#222">4,305.60</div>
<div class="abs" style="left:1128px;top:243.5px;width:100px;text-align:right;font-size:13.5px;line-height:16px;color:#222">2,610.10</div>
<div class="abs" style="left:1230px;top:243.5px;width:100px;text-align:right;font-size:13.5px;line-height:16px;color:#222">4,110.40</div>
<div class="abs" style="left:1332px;top:243.5px;width:100px;text-align:right;font-size:13.5px;line-height:16px;color:#222">4,273.26</div>
<div class="abs" style="left:1434px;top:243.5px;width:100px;text-align:right;font-size:13.5px;line-height:16px;color:#222">4,148.80</div>
<div class="abs" style="left:1536px;top:243.5px;width:100px;text-align:right;font-size:13.5px;line-height:16px;color:#222">2,907.79</div>
<div class="abs" style="left:1638px;top:243.5px;width:100px;text-align:right;font-size:13.5px;line-height:16px;color:#222">4,579.20</div>
<div class="abs" style="left:387px;top:263.96999999999997px;width:1353px;height:1px;background:#d6e1e1"></div>
<div class="abs" style="left:394px;top:275.96999999999997px;width:2px;height:2px;background:#6a78b4"></div>
<div class="abs" style="left:407px;top:270.46999999999997px;font-size:13px;line-height:16px;color:#222;white-space:nowrap">福利</div>
<div class="abs" style="left:516px;top:269.27px;width:100px;text-align:right;font-size:13.5px;line-height:16px;color:#222">1,531.03</div>
<div class="abs" style="left:618px;top:269.27px;width:100px;text-align:right;font-size:13.5px;line-height:16px;color:#222">9,248.40</div>
<div class="abs" style="left:720px;top:269.27px;width:100px;text-align:right;font-size:13.5px;line-height:16px;color:#222">177.26</div>
<div class="abs" style="left:822px;top:269.27px;width:100px;text-align:right;font-size:13.5px;line-height:16px;color:#222">770.70</div>
<div class="abs" style="left:924px;top:269.27px;width:100px;text-align:right;font-size:13.5px;line-height:16px;color:#222">269.75</div>
<div class="abs" style="left:1026px;top:269.27px;width:100px;text-align:right;font-size:13.5px;line-height:16px;color:#222">770.70</div>
<div class="abs" style="left:1128px;top:269.27px;width:100px;text-align:right;font-size:13.5px;line-height:16px;color:#222">269.75</div>
<div class="abs" style="left:1230px;top:269.27px;width:100px;text-align:right;font-size:13.5px;line-height:16px;color:#222">770.70</div>
<div class="abs" style="left:1332px;top:269.27px;width:100px;text-align:right;font-size:13.5px;line-height:16px;color:#222">544.53</div>
<div class="abs" style="left:1434px;top:269.27px;width:100px;text-align:right;font-size:13.5px;line-height:16px;color:#222">770.70</div>
<div class="abs" style="left:1536px;top:269.27px;width:100px;text-align:right;font-size:13.5px;line-height:16px;color:#222">269.75</div>
<div class="abs" style="left:1638px;top:269.27px;width:100px;text-align:right;font-size:13.5px;line-height:16px;color:#222">770.70</div>
<div class="abs" style="left:387px;top:289.74px;width:1353px;height:1px;background:#d6e1e1"></div>
<div class="abs" style="left:394px;top:301.74px;width:2px;height:2px;background:#6a78b4"></div>
<div class="abs" style="left:407px;top:296.24px;font-size:13px;line-height:16px;color:#222;white-space:nowrap">工会经费</div>
<div class="abs" style="left:516px;top:295.04px;width:100px;text-align:right;font-size:13.5px;line-height:16px;color:#222">1,542.96</div>
<div class="abs" style="left:618px;top:295.04px;width:100px;text-align:right;font-size:13.5px;line-height:16px;color:#222">7,908.00</div>
<div class="abs" style="left:720px;top:295.04px;width:100px;text-align:right;font-size:13.5px;line-height:16px;color:#222">224.06</div>
<div class="abs" style="left:822px;top:295.04px;width:100px;text-align:right;font-size:13.5px;line-height:16px;color:#222">659.00</div>
<div class="abs" style="left:924px;top:295.04px;width:100px;text-align:right;font-size:13.5px;line-height:16px;color:#222">316.32</div>
<div class="abs" style="left:1026px;top:295.04px;width:100px;text-align:right;font-size:13.5px;line-height:16px;color:#222">659.00</div>
<div class="abs" style="left:1128px;top:295.04px;width:100px;text-align:right;font-size:13.5px;line-height:16px;color:#222">316.32</div>
<div class="abs" style="left:1230px;top:295.04px;width:100px;text-align:right;font-size:13.5px;line-height:16px;color:#222">659.00</div>
<div class="abs" style="left:1332px;top:295.04px;width:100px;text-align:right;font-size:13.5px;line-height:16px;color:#222">369.94</div>
<div class="abs" style="left:1434px;top:295.04px;width:100px;text-align:right;font-size:13.5px;line-height:16px;color:#222">659.00</div>
<div class="abs" style="left:1536px;top:295.04px;width:100px;text-align:right;font-size:13.5px;line-height:16px;color:#222">316.32</div>
<div class="abs" style="left:1638px;top:295.04px;width:100px;text-align:right;font-size:13.5px;line-height:16px;color:#222">659.00</div>
<div class="abs" style="left:387px;top:315.51px;width:1353px;height:1px;background:#d6e1e1"></div>
<div class="abs" style="left:394px;top:327.51px;width:2px;height:2px;background:#6a78b4"></div>
<div class="abs" style="left:407px;top:322.01px;font-size:13px;line-height:16px;color:#222;white-space:nowrap">教育经费</div>
<div class="abs" style="left:516px;top:320.81px;width:100px;text-align:right;font-size:13.5px;line-height:16px;color:#222">2,210.41</div>
<div class="abs" style="left:618px;top:320.81px;width:100px;text-align:right;font-size:13.5px;line-height:16px;color:#222">9,003.60</div>
<div class="abs" style="left:720px;top:320.81px;width:100px;text-align:right;font-size:13.5px;line-height:16px;color:#222">202.58</div>
<div class="abs" style="left:822px;top:320.81px;width:100px;text-align:right;font-size:13.5px;line-height:16px;color:#222">750.30</div>
<div class="abs" style="left:924px;top:320.81px;width:100px;text-align:right;font-size:13.5px;line-height:16px;color:#222">517.71</div>
<div class="abs" style="left:1026px;top:320.81px;width:100px;text-align:right;font-size:13.5px;line-height:16px;color:#222">750.30</div>
<div class="abs" style="left:1128px;top:320.81px;width:100px;text-align:right;font-size:13.5px;line-height:16px;color:#222">517.71</div>
<div class="abs" style="left:1230px;top:320.81px;width:100px;text-align:right;font-size:13.5px;line-height:16px;color:#222">750.30</div>
<div class="abs" style="left:1332px;top:320.81px;width:100px;text-align:right;font-size:13.5px;line-height:16px;color:#222">454.71</div>
<div class="abs" style="left:1434px;top:320.81px;width:100px;text-align:right;font-size:13.5px;line-height:16px;color:#222">750.30</div>
<div class="abs" style="left:1536px;top:320.81px;width:100px;text-align:right;font-size:13.5px;line-height:16px;color:#222">517.71</div>
<div class="abs" style="left:1638px;top:320.81px;width:100px;text-align:right;font-size:13.5px;line-height:16px;color:#222">750.30</div>
<div class="abs" style="left:387px;top:341.28px;width:1353px;height:1px;background:#d6e1e1"></div>
<div class="abs" style="left:394px;top:353.28px;width:2px;height:2px;background:#6a78b4"></div>
<div class="abs" style="left:407px;top:347.78px;font-size:13px;line-height:16px;color:#222;white-space:nowrap">社会保险费</div>
<div class="abs" style="left:516px;top:346.58px;width:100px;text-align:right;font-size:13.5px;line-height:16px;color:#222">1,630.07</div>
<div class="abs" style="left:618px;top:346.58px;width:100px;text-align:right;font-size:13.5px;line-height:16px;color:#222">6,828.00</div>
<div class="abs" style="left:720px;top:346.58px;width:100px;text-align:right;font-size:13.5px;line-height:16px;color:#222">204.84</div>
<div class="abs" style="left:822px;top:346.58px;width:100px;text-align:right;font-size:13.5px;line-height:16px;color:#222">569.00</div>
<div class="abs" style="left:924px;top:346.58px;width:100px;text-align:right;font-size:13.5px;line-height:16px;color:#222">330.02</div>
<div class="abs" style="left:1026px;top:346.58px;width:100px;text-align:right;font-size:13.5px;line-height:16px;color:#222">569.00</div>
<div class="abs" style="left:1128px;top:346.58px;width:100px;text-align:right;font-size:13.5px;line-height:16px;color:#222">330.02</div>
<div class="abs" style="left:1230px;top:346.58px;width:100px;text-align:right;font-size:13.5px;line-height:16px;color:#222">569.00</div>
<div class="abs" style="left:1332px;top:346.58px;width:100px;text-align:right;font-size:13.5px;line-height:16px;color:#222">435.17</div>
<div class="abs" style="left:1434px;top:346.58px;width:100px;text-align:right;font-size:13.5px;line-height:16px;color:#222">569.00</div>
<div class="abs" style="left:1536px;top:346.58px;width:100px;text-align:right;font-size:13.5px;line-height:16px;color:#222">330.02</div>
<div class="abs" style="left:1638px;top:346.58px;width:100px;text-align:right;font-size:13.5px;line-height:16px;color:#222">569.00</div>
<div class="abs" style="left:387px;top:367.04999999999995px;width:1353px;height:1px;background:#d6e1e1"></div>
<div class="abs" style="left:394px;top:379.04999999999995px;width:2px;height:2px;background:#6a78b4"></div>
<div class="abs" style="left:407px;top:373.54999999999995px;font-size:13px;line-height:16px;color:#222;white-space:nowrap">养老保险</div>
<div class="abs" style="left:516px;top:372.34999999999997px;width:100px;text-align:right;font-size:13.5px;line-height:16px;color:#222">1,039.20</div>
<div class="abs" style="left:618px;top:372.34999999999997px;width:100px;text-align:right;font-size:13.5px;line-height:16px;color:#222">3,418.00</div>
<div class="abs" style="left:720px;top:372.34999999999997px;width:100px;text-align:right;font-size:13.5px;line-height:16px;color:#222">62.16</div>
<div class="abs" style="left:822px;top:372.34999999999997px;width:100px;text-align:right;font-size:13.5px;line-height:16px;color:#222">259.00</div>
<div class="abs" style="left:924px;top:372.34999999999997px;width:100px;text-align:right;font-size:13.5px;line-height:16px;color:#222">152.81</div>
<div class="abs" style="left:1026px;top:372.34999999999997px;width:100px;text-align:right;font-size:13.5px;line-height:16px;color:#222">259.00</div>
<div class="abs" style="left:1128px;top:372.34999999999997px;width:100px;text-align:right;font-size:13.5px;line-height:16px;color:#222">152.81</div>
<div class="abs" style="left:1230px;top:372.34999999999997px;width:100px;text-align:right;font-size:13.5px;line-height:16px;color:#222">259.00</div>
<div class="abs" style="left:1332px;top:372.34999999999997px;width:100px;text-align:right;font-size:13.5px;line-height:16px;color:#222">335.71</div>
<div class="abs" style="left:1434px;top:372.34999999999997px;width:100px;text-align:right;font-size:13.5px;line-height:16px;color:#222">259.00</div>
<div class="abs" style="left:1536px;top:372.34999999999997px;width:100px;text-align:right;font-size:13.5px;line-height:16px;color:#222">335.71</div>
<div class="abs" style="left:1638px;top:372.34999999999997px;width:100px;text-align:right;font-size:13.5px;line-height:16px;color:#222">569.00</div>
<div class="abs" style="left:387px;top:392.82px;width:1353px;height:1px;background:#d6e1e1"></div>
<div class="abs" style="left:394px;top:404.82px;width:2px;height:2px;background:#6a78b4"></div>
<div class="abs" style="left:407px;top:399.32px;font-size:13px;line-height:16px;color:#222;white-space:nowrap">医疗保险</div>
<div class="abs" style="left:516px;top:398.12px;width:100px;text-align:right;font-size:13.5px;line-height:16px;color:#222">954.31</div>
<div class="abs" style="left:618px;top:398.12px;width:100px;text-align:right;font-size:13.5px;line-height:16px;color:#222">3,048.00</div>
<div class="abs" style="left:720px;top:398.12px;width:100px;text-align:right;font-size:13.5px;line-height:16px;color:#222">66.04</div>
<div class="abs" style="left:822px;top:398.12px;width:100px;text-align:right;font-size:13.5px;line-height:16px;color:#222">254.00</div>
<div class="abs" style="left:924px;top:398.12px;width:100px;text-align:right;font-size:13.5px;line-height:16px;color:#222">220.98</div>
<div class="abs" style="left:1026px;top:398.12px;width:100px;text-align:right;font-size:13.5px;line-height:16px;color:#222">254.00</div>
<div class="abs" style="left:1128px;top:398.12px;width:100px;text-align:right;font-size:13.5px;line-height:16px;color:#222">220.98</div>
<div class="abs" style="left:1230px;top:398.12px;width:100px;text-align:right;font-size:13.5px;line-height:16px;color:#222">254.00</div>
<div class="abs" style="left:1332px;top:398.12px;width:100px;text-align:right;font-size:13.5px;line-height:16px;color:#222">225.33</div>
<div class="abs" style="left:1434px;top:398.12px;width:100px;text-align:right;font-size:13.5px;line-height:16px;color:#222">254.00</div>
<div class="abs" style="left:1536px;top:398.12px;width:100px;text-align:right;font-size:13.5px;line-height:16px;color:#222">220.98</div>
<div class="abs" style="left:1638px;top:398.12px;width:100px;text-align:right;font-size:13.5px;line-height:16px;color:#222">254.00</div>
<div class="abs" style="left:387px;top:418.59px;width:1353px;height:1px;background:#d6e1e1"></div>
<div class="abs" style="left:394px;top:430.59px;width:2px;height:2px;background:#6a78b4"></div>
<div class="abs" style="left:407px;top:425.09px;font-size:13px;line-height:16px;color:#222;white-space:nowrap">工伤保险</div>
<div class="abs" style="left:516px;top:423.89px;width:100px;text-align:right;font-size:13.5px;line-height:16px;color:#222">699.63</div>
<div class="abs" style="left:618px;top:423.89px;width:100px;text-align:right;font-size:13.5px;line-height:16px;color:#222">2,516.00</div>
<div class="abs" style="left:720px;top:423.89px;width:100px;text-align:right;font-size:13.5px;line-height:16px;color:#222">70.35</div>
<div class="abs" style="left:822px;top:423.89px;width:100px;text-align:right;font-size:13.5px;line-height:16px;color:#222">201.00</div>
<div class="abs" style="left:924px;top:423.89px;width:100px;text-align:right;font-size:13.5px;line-height:16px;color:#222">138.69</div>
<div class="abs" style="left:1026px;top:423.89px;width:100px;text-align:right;font-size:13.5px;line-height:16px;color:#222">201.00</div>
<div class="abs" style="left:1128px;top:423.89px;width:100px;text-align:right;font-size:13.5px;line-height:16px;color:#222">176.64</div>
<div class="abs" style="left:1230px;top:423.89px;width:100px;text-align:right;font-size:13.5px;line-height:16px;color:#222">256.00</div>
<div class="abs" style="left:1332px;top:423.89px;width:100px;text-align:right;font-size:13.5px;line-height:16px;color:#222">175.26</div>
<div class="abs" style="left:1434px;top:423.89px;width:100px;text-align:right;font-size:13.5px;line-height:16px;color:#222">201.00</div>
<div class="abs" style="left:1536px;top:423.89px;width:100px;text-align:right;font-size:13.5px;line-height:16px;color:#222">138.69</div>
<div class="abs" style="left:1638px;top:423.89px;width:100px;text-align:right;font-size:13.5px;line-height:16px;color:#222">201.00</div>
<div class="abs" style="left:387px;top:444.36px;width:1353px;height:1px;background:#d6e1e1"></div>
<div class="abs" style="left:394px;top:456.36px;width:2px;height:2px;background:#6a78b4"></div>
<div class="abs" style="left:407px;top:450.86px;font-size:13px;line-height:16px;color:#222;white-space:nowrap">失业保险</div>
<div class="abs" style="left:516px;top:449.65999999999997px;width:100px;text-align:right;font-size:13.5px;line-height:16px;color:#222">554.77</div>
<div class="abs" style="left:618px;top:449.65999999999997px;width:100px;text-align:right;font-size:13.5px;line-height:16px;color:#222">1,543.00</div>
<div class="abs" style="left:720px;top:449.65999999999997px;width:100px;text-align:right;font-size:13.5px;line-height:16px;color:#222">111.25</div>
<div class="abs" style="left:822px;top:449.65999999999997px;width:100px;text-align:right;font-size:13.5px;line-height:16px;color:#222">125.00</div>
<div class="abs" style="left:924px;top:449.65999999999997px;width:100px;text-align:right;font-size:13.5px;line-height:16px;color:#222">96.25</div>
<div class="abs" style="left:1026px;top:449.65999999999997px;width:100px;text-align:right;font-size:13.5px;line-height:16px;color:#222">125.00</div>
<div class="abs" style="left:1128px;top:449.65999999999997px;width:100px;text-align:right;font-size:13.5px;line-height:16px;color:#222">96.25</div>
<div class="abs" style="left:1230px;top:449.65999999999997px;width:100px;text-align:right;font-size:13.5px;line-height:16px;color:#222">125.00</div>
<div class="abs" style="left:1332px;top:449.65999999999997px;width:100px;text-align:right;font-size:13.5px;line-height:16px;color:#222">154.77</div>
<div class="abs" style="left:1434px;top:449.65999999999997px;width:100px;text-align:right;font-size:13.5px;line-height:16px;color:#222">125.00</div>
<div class="abs" style="left:1536px;top:449.65999999999997px;width:100px;text-align:right;font-size:13.5px;line-height:16px;color:#222">96.25</div>
<div class="abs" style="left:1638px;top:449.65999999999997px;width:100px;text-align:right;font-size:13.5px;line-height:16px;color:#222">125.00</div>
<div class="abs" style="left:387px;top:470.13px;width:1353px;height:1px;background:#d6e1e1"></div>
<div class="abs" style="left:394px;top:482.13px;width:2px;height:2px;background:#6a78b4"></div>
<div class="abs" style="left:407px;top:476.63px;font-size:13px;line-height:16px;color:#222;white-space:nowrap">生育保险</div>
<div class="abs" style="left:516px;top:475.42999999999995px;width:100px;text-align:right;font-size:13.5px;line-height:16px;color:#222">781.44</div>
<div class="abs" style="left:618px;top:475.42999999999995px;width:100px;text-align:right;font-size:13.5px;line-height:16px;color:#222">2,188.00</div>
<div class="abs" style="left:720px;top:475.42999999999995px;width:100px;text-align:right;font-size:13.5px;line-height:16px;color:#222">49.84</div>
<div class="abs" style="left:822px;top:475.42999999999995px;width:100px;text-align:right;font-size:13.5px;line-height:16px;color:#222">89.00</div>
<div class="abs" style="left:924px;top:475.42999999999995px;width:100px;text-align:right;font-size:13.5px;line-height:16px;color:#222">143.22</div>
<div class="abs" style="left:1026px;top:475.42999999999995px;width:100px;text-align:right;font-size:13.5px;line-height:16px;color:#222">231.00</div>
<div class="abs" style="left:1128px;top:475.42999999999995px;width:100px;text-align:right;font-size:13.5px;line-height:16px;color:#222">352.16</div>
<div class="abs" style="left:1230px;top:475.42999999999995px;width:100px;text-align:right;font-size:13.5px;line-height:16px;color:#222">568.00</div>
<div class="abs" style="left:1332px;top:475.42999999999995px;width:100px;text-align:right;font-size:13.5px;line-height:16px;color:#222">77.50</div>
<div class="abs" style="left:1434px;top:475.42999999999995px;width:100px;text-align:right;font-size:13.5px;line-height:16px;color:#222">89.00</div>
<div class="abs" style="left:1536px;top:475.42999999999995px;width:100px;text-align:right;font-size:13.5px;line-height:16px;color:#222">158.72</div>
<div class="abs" style="left:1638px;top:475.42999999999995px;width:100px;text-align:right;font-size:13.5px;line-height:16px;color:#222">256.00</div>
<div class="abs" style="left:387px;top:495.9px;width:1353px;height:1px;background:#d6e1e1"></div>
<div class="abs" style="left:394px;top:507.9px;width:2px;height:2px;background:#6a78b4"></div>
<div class="abs" style="left:407px;top:502.4px;font-size:13px;line-height:16px;color:#222;white-space:nowrap">其他</div>
<div class="abs" style="left:516px;top:501.19999999999993px;width:100px;text-align:right;font-size:13.5px;line-height:16px;color:#222">903.32</div>
<div class="abs" style="left:618px;top:501.19999999999993px;width:100px;text-align:right;font-size:13.5px;line-height:16px;color:#222">3,200.00</div>
<div class="abs" style="left:720px;top:501.19999999999993px;width:100px;text-align:right;font-size:13.5px;line-height:16px;color:#222">200.38</div>
<div class="abs" style="left:822px;top:501.19999999999993px;width:100px;text-align:right;font-size:13.5px;line-height:16px;color:#222">256.90</div>
<div class="abs" style="left:924px;top:501.19999999999993px;width:100px;text-align:right;font-size:13.5px;line-height:16px;color:#222">209.90</div>
<div class="abs" style="left:1026px;top:501.19999999999993px;width:100px;text-align:right;font-size:13.5px;line-height:16px;color:#222">269.10</div>
<div class="abs" style="left:1128px;top:501.19999999999993px;width:100px;text-align:right;font-size:13.5px;line-height:16px;color:#222">200.38</div>
<div class="abs" style="left:1230px;top:501.19999999999993px;width:100px;text-align:right;font-size:13.5px;line-height:16px;color:#222">256.90</div>
<div class="abs" style="left:1332px;top:501.19999999999993px;width:100px;text-align:right;font-size:13.5px;line-height:16px;color:#222">69.42</div>
<div class="abs" style="left:1434px;top:501.19999999999993px;width:100px;text-align:right;font-size:13.5px;line-height:16px;color:#222">259.30</div>
<div class="abs" style="left:1536px;top:501.19999999999993px;width:100px;text-align:right;font-size:13.5px;line-height:16px;color:#222">223.24</div>
<div class="abs" style="left:1638px;top:501.19999999999993px;width:100px;text-align:right;font-size:13.5px;line-height:16px;color:#222">286.20</div>
<div class="abs" style="left:387px;top:521.67px;width:1353px;height:1px;background:#d6e1e1"></div>
<div class="abs" style="left:394px;top:533.67px;width:2px;height:2px;background:#6a78b4"></div>
<div class="abs" style="left:407px;top:528.17px;font-size:13px;line-height:16px;color:#222;white-space:nowrap">住房费用</div>
<div class="abs" style="left:516px;top:526.9699999999999px;width:100px;text-align:right;font-size:13.5px;line-height:16px;color:#222">1,099.08</div>
<div class="abs" style="left:618px;top:526.9699999999999px;width:100px;text-align:right;font-size:13.5px;line-height:16px;color:#222">4,249.00</div>
<div class="abs" style="left:720px;top:526.9699999999999px;width:100px;text-align:right;font-size:13.5px;line-height:16px;color:#222">247.52</div>
<div class="abs" style="left:822px;top:526.9699999999999px;width:100px;text-align:right;font-size:13.5px;line-height:16px;color:#222">364.00</div>
<div class="abs" style="left:924px;top:526.9699999999999px;width:100px;text-align:right;font-size:13.5px;line-height:16px;color:#222">247.52</div>
<div class="abs" style="left:1026px;top:526.9699999999999px;width:100px;text-align:right;font-size:13.5px;line-height:16px;color:#222">364.00</div>
<div class="abs" style="left:1128px;top:526.9699999999999px;width:100px;text-align:right;font-size:13.5px;line-height:16px;color:#222">247.52</div>
<div class="abs" style="left:1230px;top:526.9699999999999px;width:100px;text-align:right;font-size:13.5px;line-height:16px;color:#222">364.00</div>
<div class="abs" style="left:1332px;top:526.9699999999999px;width:100px;text-align:right;font-size:13.5px;line-height:16px;color:#222">176.32</div>
<div class="abs" style="left:1434px;top:526.9699999999999px;width:100px;text-align:right;font-size:13.5px;line-height:16px;color:#222">364.00</div>
<div class="abs" style="left:1536px;top:526.9699999999999px;width:100px;text-align:right;font-size:13.5px;line-height:16px;color:#222">180.20</div>
<div class="abs" style="left:1638px;top:526.9699999999999px;width:100px;text-align:right;font-size:13.5px;line-height:16px;color:#222">265.00</div>
<div class="abs" style="left:387px;top:547.44px;width:1353px;height:1px;background:#d6e1e1"></div>
<div class="abs" style="left:394px;top:559.44px;width:2px;height:2px;background:#6a78b4"></div>
<div class="abs" style="left:407px;top:553.94px;font-size:13px;line-height:16px;color:#222;white-space:nowrap">住房公积金</div>
<div class="abs" style="left:516px;top:552.74px;width:100px;text-align:right;font-size:13.5px;line-height:16px;color:#222">890.30</div>
<div class="abs" style="left:618px;top:552.74px;width:100px;text-align:right;font-size:13.5px;line-height:16px;color:#222">3,375.00</div>
<div class="abs" style="left:720px;top:552.74px;width:100px;text-align:right;font-size:13.5px;line-height:16px;color:#222">156.02</div>
<div class="abs" style="left:822px;top:552.74px;width:100px;text-align:right;font-size:13.5px;line-height:16px;color:#222">269.00</div>
<div class="abs" style="left:924px;top:552.74px;width:100px;text-align:right;font-size:13.5px;line-height:16px;color:#222">156.02</div>
<div class="abs" style="left:1026px;top:552.74px;width:100px;text-align:right;font-size:13.5px;line-height:16px;color:#222">269.00</div>
<div class="abs" style="left:1128px;top:552.74px;width:100px;text-align:right;font-size:13.5px;line-height:16px;color:#222">156.02</div>
<div class="abs" style="left:1230px;top:552.74px;width:100px;text-align:right;font-size:13.5px;line-height:16px;color:#222">269.00</div>
<div class="abs" style="left:1332px;top:552.74px;width:100px;text-align:right;font-size:13.5px;line-height:16px;color:#222">211.12</div>
<div class="abs" style="left:1434px;top:552.74px;width:100px;text-align:right;font-size:13.5px;line-height:16px;color:#222">269.00</div>
<div class="abs" style="left:1536px;top:552.74px;width:100px;text-align:right;font-size:13.5px;line-height:16px;color:#222">211.12</div>
<div class="abs" style="left:1638px;top:552.74px;width:100px;text-align:right;font-size:13.5px;line-height:16px;color:#222">364.00</div>
<div class="abs" style="left:387px;top:573.21px;width:1353px;height:1px;background:#d6e1e1"></div>
<div class="abs" style="left:394px;top:585.21px;width:2px;height:2px;background:#6a78b4"></div>
<div class="abs" style="left:407px;top:579.71px;font-size:13px;line-height:16px;color:#222;white-space:nowrap">辞退福利</div>
<div class="abs" style="left:516px;top:578.51px;width:100px;text-align:right;font-size:13.5px;line-height:16px;color:#222">334.25</div>
<div class="abs" style="left:618px;top:578.51px;width:100px;text-align:right;font-size:13.5px;line-height:16px;color:#222">3,183.00</div>
<div class="abs" style="left:720px;top:578.51px;width:100px;text-align:right;font-size:13.5px;line-height:16px;color:#222">66.25</div>
<div class="abs" style="left:822px;top:578.51px;width:100px;text-align:right;font-size:13.5px;line-height:16px;color:#222">265.00</div>
<div class="abs" style="left:924px;top:578.51px;width:100px;text-align:right;font-size:13.5px;line-height:16px;color:#222">67.25</div>
<div class="abs" style="left:1026px;top:578.51px;width:100px;text-align:right;font-size:13.5px;line-height:16px;color:#222">269.00</div>
<div class="abs" style="left:1128px;top:578.51px;width:100px;text-align:right;font-size:13.5px;line-height:16px;color:#222">66.25</div>
<div class="abs" style="left:1230px;top:578.51px;width:100px;text-align:right;font-size:13.5px;line-height:16px;color:#222">265.00</div>
<div class="abs" style="left:1332px;top:578.51px;width:100px;text-align:right;font-size:13.5px;line-height:16px;color:#222">67.25</div>
<div class="abs" style="left:1434px;top:578.51px;width:100px;text-align:right;font-size:13.5px;line-height:16px;color:#222">265.00</div>
<div class="abs" style="left:1536px;top:578.51px;width:100px;text-align:right;font-size:13.5px;line-height:16px;color:#222">67.25</div>
<div class="abs" style="left:1638px;top:578.51px;width:100px;text-align:right;font-size:13.5px;line-height:16px;color:#222">269.00</div>
<div class="abs" style="left:387px;top:598.98px;width:1353px;height:1px;background:#d6e1e1"></div>
<div class="abs" style="left:394px;top:610.98px;width:2px;height:2px;background:#6a78b4"></div>
<div class="abs" style="left:407px;top:605.48px;font-size:13px;line-height:16px;color:#222;white-space:nowrap">其他</div>
<div class="abs" style="left:516px;top:604.28px;width:100px;text-align:right;font-size:13.5px;line-height:16px;color:#222">464.04</div>
<div class="abs" style="left:618px;top:604.28px;width:100px;text-align:right;font-size:13.5px;line-height:16px;color:#222">3,072.00</div>
<div class="abs" style="left:720px;top:604.28px;width:100px;text-align:right;font-size:13.5px;line-height:16px;color:#222">92.16</div>
<div class="abs" style="left:822px;top:604.28px;width:100px;text-align:right;font-size:13.5px;line-height:16px;color:#222">256.00</div>
<div class="abs" style="left:924px;top:604.28px;width:100px;text-align:right;font-size:13.5px;line-height:16px;color:#222">92.16</div>
<div class="abs" style="left:1026px;top:604.28px;width:100px;text-align:right;font-size:13.5px;line-height:16px;color:#222">256.00</div>
<div class="abs" style="left:1128px;top:604.28px;width:100px;text-align:right;font-size:13.5px;line-height:16px;color:#222">92.16</div>
<div class="abs" style="left:1230px;top:604.28px;width:100px;text-align:right;font-size:13.5px;line-height:16px;color:#222">256.00</div>
<div class="abs" style="left:1332px;top:604.28px;width:100px;text-align:right;font-size:13.5px;line-height:16px;color:#222">95.40</div>
<div class="abs" style="left:1434px;top:604.28px;width:100px;text-align:right;font-size:13.5px;line-height:16px;color:#222">256.00</div>
<div class="abs" style="left:1536px;top:604.28px;width:100px;text-align:right;font-size:13.5px;line-height:16px;color:#222">92.16</div>
<div class="abs" style="left:1638px;top:604.28px;width:100px;text-align:right;font-size:13.5px;line-height:16px;color:#222">256.00</div>
<div class="abs" style="left:387px;top:624.75px;width:1353px;height:1px;background:#d6e1e1"></div>
<div class="abs" style="left:394px;top:636.75px;width:2px;height:2px;background:#6a78b4"></div>
<div class="abs" style="left:407px;top:631.25px;font-size:13px;line-height:16px;color:#222;white-space:nowrap">办公费</div>
<div class="abs" style="left:516px;top:630.05px;width:100px;text-align:right;font-size:13.5px;line-height:16px;color:#222">472.32</div>
<div class="abs" style="left:618px;top:630.05px;width:100px;text-align:right;font-size:13.5px;line-height:16px;color:#222">3,168.00</div>
<div class="abs" style="left:720px;top:630.05px;width:100px;text-align:right;font-size:13.5px;line-height:16px;color:#222">95.04</div>
<div class="abs" style="left:822px;top:630.05px;width:100px;text-align:right;font-size:13.5px;line-height:16px;color:#222">264.00</div>
<div class="abs" style="left:924px;top:630.05px;width:100px;text-align:right;font-size:13.5px;line-height:16px;color:#222">95.04</div>
<div class="abs" style="left:1026px;top:630.05px;width:100px;text-align:right;font-size:13.5px;line-height:16px;color:#222">264.00</div>
<div class="abs" style="left:1128px;top:630.05px;width:100px;text-align:right;font-size:13.5px;line-height:16px;color:#222">95.04</div>
<div class="abs" style="left:1230px;top:630.05px;width:100px;text-align:right;font-size:13.5px;line-height:16px;color:#222">264.00</div>
<div class="abs" style="left:1332px;top:630.05px;width:100px;text-align:right;font-size:13.5px;line-height:16px;color:#222">92.16</div>
<div class="abs" style="left:1434px;top:630.05px;width:100px;text-align:right;font-size:13.5px;line-height:16px;color:#222">264.00</div>
<div class="abs" style="left:1536px;top:630.05px;width:100px;text-align:right;font-size:13.5px;line-height:16px;color:#222">95.04</div>
<div class="abs" style="left:1638px;top:630.05px;width:100px;text-align:right;font-size:13.5px;line-height:16px;color:#222">264.00</div>
<div class="abs" style="left:387px;top:650.52px;width:1353px;height:1px;background:#d6e1e1"></div>
<div class="abs" style="left:394px;top:662.52px;width:2px;height:2px;background:#6a78b4"></div>
<div class="abs" style="left:407px;top:657.02px;font-size:13px;line-height:16px;color:#222;white-space:nowrap">办公室装潢</div>
<div class="abs" style="left:516px;top:655.8199999999999px;width:100px;text-align:right;font-size:13.5px;line-height:16px;color:#222">1,186.46</div>
<div class="abs" style="left:618px;top:655.8199999999999px;width:100px;text-align:right;font-size:13.5px;line-height:16px;color:#222">3,200.00</div>
<div class="abs" style="left:720px;top:655.8199999999999px;width:100px;text-align:right;font-size:13.5px;line-height:16px;color:#222">228.64</div>
<div class="abs" style="left:822px;top:655.8199999999999px;width:100px;text-align:right;font-size:13.5px;line-height:16px;color:#222">256.90</div>
<div class="abs" style="left:924px;top:655.8199999999999px;width:100px;text-align:right;font-size:13.5px;line-height:16px;color:#222">239.50</div>
<div class="abs" style="left:1026px;top:655.8199999999999px;width:100px;text-align:right;font-size:13.5px;line-height:16px;color:#222">269.10</div>
<div class="abs" style="left:1128px;top:655.8199999999999px;width:100px;text-align:right;font-size:13.5px;line-height:16px;color:#222">228.64</div>
<div class="abs" style="left:1230px;top:655.8199999999999px;width:100px;text-align:right;font-size:13.5px;line-height:16px;color:#222">256.90</div>
<div class="abs" style="left:1332px;top:655.8199999999999px;width:100px;text-align:right;font-size:13.5px;line-height:16px;color:#222">234.96</div>
<div class="abs" style="left:1434px;top:655.8199999999999px;width:100px;text-align:right;font-size:13.5px;line-height:16px;color:#222">259.30</div>
<div class="abs" style="left:1536px;top:655.8199999999999px;width:100px;text-align:right;font-size:13.5px;line-height:16px;color:#222">254.72</div>
<div class="abs" style="left:1638px;top:655.8199999999999px;width:100px;text-align:right;font-size:13.5px;line-height:16px;color:#222">286.20</div>
<div class="abs" style="left:258px;top:676.29px;width:1482px;height:1px;background:#d6e1e1"></div>
<div class="abs" style="left:390px;top:683.99px;width:12px;height:12px;border:1px solid #a9b9d8;border-radius:3px;background:#fff"></div>
<div class="abs" style="left:392px;top:689.04px;width:8px;height:1.3px;background:#111"></div>
<div class="abs" style="left:395.35px;top:686.0899999999999px;width:1.3px;height:7.3px;background:#333"></div>
<div class="abs" style="left:407px;top:682.79px;font-size:13px;line-height:16px;color:#222;white-space:nowrap">工资</div>
<div class="abs" style="left:516px;top:681.5899999999999px;width:100px;text-align:right;font-size:13.5px;line-height:16px;color:#222">14,228.01</div>
<div class="abs" style="left:618px;top:681.5899999999999px;width:100px;text-align:right;font-size:13.5px;line-height:16px;color:#222">54,634.06</div>
<div class="abs" style="left:720px;top:681.5899999999999px;width:100px;text-align:right;font-size:13.5px;line-height:16px;color:#222">2,682.00</div>
<div class="abs" style="left:822px;top:681.5899999999999px;width:100px;text-align:right;font-size:13.5px;line-height:16px;color:#222">4,221.00</div>
<div class="abs" style="left:924px;top:681.5899999999999px;width:100px;text-align:right;font-size:13.5px;line-height:16px;color:#222">2,735.64</div>
<div class="abs" style="left:1026px;top:681.5899999999999px;width:100px;text-align:right;font-size:13.5px;line-height:16px;color:#222">4,305.42</div>
<div class="abs" style="left:1128px;top:681.5899999999999px;width:100px;text-align:right;font-size:13.5px;line-height:16px;color:#222">2,722.23</div>
<div class="abs" style="left:1230px;top:681.5899999999999px;width:100px;text-align:right;font-size:13.5px;line-height:16px;color:#222">4,284.32</div>
<div class="abs" style="left:1332px;top:681.5899999999999px;width:100px;text-align:right;font-size:13.5px;line-height:16px;color:#222">3,352.50</div>
<div class="abs" style="left:1434px;top:681.5899999999999px;width:100px;text-align:right;font-size:13.5px;line-height:16px;color:#222">5,276.25</div>
<div class="abs" style="left:1536px;top:681.5899999999999px;width:100px;text-align:right;font-size:13.5px;line-height:16px;color:#222">2,735.64</div>
<div class="abs" style="left:1638px;top:681.5899999999999px;width:100px;text-align:right;font-size:13.5px;line-height:16px;color:#222">4,305.42</div>
<div class="abs" style="left:387px;top:702.06px;width:1353px;height:1px;background:#d6e1e1"></div>
<div class="abs" style="left:394px;top:714.06px;width:2px;height:2px;background:#6a78b4"></div>
<div class="abs" style="left:407px;top:708.56px;font-size:13px;line-height:16px;color:#222;white-space:nowrap">福利</div>
<div class="abs" style="left:516px;top:707.3599999999999px;width:100px;text-align:right;font-size:13.5px;line-height:16px;color:#222">1,661.79</div>
<div class="abs" style="left:618px;top:707.3599999999999px;width:100px;text-align:right;font-size:13.5px;line-height:16px;color:#222">11,385.40</div>
<div class="abs" style="left:720px;top:707.3599999999999px;width:100px;text-align:right;font-size:13.5px;line-height:16px;color:#222">313.25</div>
<div class="abs" style="left:822px;top:707.3599999999999px;width:100px;text-align:right;font-size:13.5px;line-height:16px;color:#222">895.00</div>
<div class="abs" style="left:924px;top:707.3599999999999px;width:100px;text-align:right;font-size:13.5px;line-height:16px;color:#222">319.52</div>
<div class="abs" style="left:1026px;top:707.3599999999999px;width:100px;text-align:right;font-size:13.5px;line-height:16px;color:#222">912.90</div>
<div class="abs" style="left:1128px;top:707.3599999999999px;width:100px;text-align:right;font-size:13.5px;line-height:16px;color:#222">317.95</div>
<div class="abs" style="left:1230px;top:707.3599999999999px;width:100px;text-align:right;font-size:13.5px;line-height:16px;color:#222">908.43</div>
<div class="abs" style="left:1332px;top:707.3599999999999px;width:100px;text-align:right;font-size:13.5px;line-height:16px;color:#222">391.56</div>
<div class="abs" style="left:1434px;top:707.3599999999999px;width:100px;text-align:right;font-size:13.5px;line-height:16px;color:#222">1,118.75</div>
<div class="abs" style="left:1536px;top:707.3599999999999px;width:100px;text-align:right;font-size:13.5px;line-height:16px;color:#222">319.52</div>
<div class="abs" style="left:1638px;top:707.3599999999999px;width:100px;text-align:right;font-size:13.5px;line-height:16px;color:#222">912.90</div>
<div class="abs" style="left:387px;top:727.8299999999999px;width:1353px;height:1px;background:#d6e1e1"></div>
<div class="abs" style="left:394px;top:739.8299999999999px;width:2px;height:2px;background:#6a78b4"></div>
<div class="abs" style="left:407px;top:734.3299999999999px;font-size:13px;line-height:16px;color:#222;white-space:nowrap">工会经费</div>
<div class="abs" style="left:516px;top:733.1299999999999px;width:100px;text-align:right;font-size:13.5px;line-height:16px;color:#222">929.44</div>
<div class="abs" style="left:618px;top:733.1299999999999px;width:100px;text-align:right;font-size:13.5px;line-height:16px;color:#222">4,791.65</div>
<div class="abs" style="left:720px;top:733.1299999999999px;width:100px;text-align:right;font-size:13.5px;line-height:16px;color:#222">175.20</div>
<div class="abs" style="left:822px;top:733.1299999999999px;width:100px;text-align:right;font-size:13.5px;line-height:16px;color:#222">365.00</div>
<div class="abs" style="left:924px;top:733.1299999999999px;width:100px;text-align:right;font-size:13.5px;line-height:16px;color:#222">178.70</div>
<div class="abs" style="left:1026px;top:733.1299999999999px;width:100px;text-align:right;font-size:13.5px;line-height:16px;color:#222">372.30</div>
<div class="abs" style="left:1128px;top:733.1299999999999px;width:100px;text-align:right;font-size:13.5px;line-height:16px;color:#222">177.83</div>
<div class="abs" style="left:1230px;top:733.1299999999999px;width:100px;text-align:right;font-size:13.5px;line-height:16px;color:#222">370.48</div>
<div class="abs" style="left:1332px;top:733.1299999999999px;width:100px;text-align:right;font-size:13.5px;line-height:16px;color:#222">219.00</div>
<div class="abs" style="left:1434px;top:733.1299999999999px;width:100px;text-align:right;font-size:13.5px;line-height:16px;color:#222">456.25</div>
<div class="abs" style="left:1536px;top:733.1299999999999px;width:100px;text-align:right;font-size:13.5px;line-height:16px;color:#222">178.70</div>
<div class="abs" style="left:1638px;top:733.1299999999999px;width:100px;text-align:right;font-size:13.5px;line-height:16px;color:#222">372.30</div>
<div class="abs" style="left:387px;top:753.5999999999999px;width:1353px;height:1px;background:#d6e1e1"></div>
<div class="abs" style="left:394px;top:765.5999999999999px;width:2px;height:2px;background:#6a78b4"></div>
<div class="abs" style="left:407px;top:760.0999999999999px;font-size:13px;line-height:16px;color:#222;white-space:nowrap">教育经费</div>
<div class="abs" style="left:516px;top:758.8999999999999px;width:100px;text-align:right;font-size:13.5px;line-height:16px;color:#222">3,111.38</div>
<div class="abs" style="left:618px;top:758.8999999999999px;width:100px;text-align:right;font-size:13.5px;line-height:16px;color:#222">10,677.23</div>
<div class="abs" style="left:720px;top:758.8999999999999px;width:100px;text-align:right;font-size:13.5px;line-height:16px;color:#222">586.50</div>
<div class="abs" style="left:822px;top:758.8999999999999px;width:100px;text-align:right;font-size:13.5px;line-height:16px;color:#222">850.00</div>
<div class="abs" style="left:924px;top:758.8999999999999px;width:100px;text-align:right;font-size:13.5px;line-height:16px;color:#222">598.23</div>
<div class="abs" style="left:1026px;top:758.8999999999999px;width:100px;text-align:right;font-size:13.5px;line-height:16px;color:#222">867.00</div>
<div class="abs" style="left:1128px;top:758.8999999999999px;width:100px;text-align:right;font-size:13.5px;line-height:16px;color:#222">595.30</div>
<div class="abs" style="left:1230px;top:758.8999999999999px;width:100px;text-align:right;font-size:13.5px;line-height:16px;color:#222">862.75</div>
<div class="abs" style="left:1332px;top:758.8999999999999px;width:100px;text-align:right;font-size:13.5px;line-height:16px;color:#222">733.13</div>
<div class="abs" style="left:1434px;top:758.8999999999999px;width:100px;text-align:right;font-size:13.5px;line-height:16px;color:#222">1,062.50</div>
<div class="abs" style="left:1536px;top:758.8999999999999px;width:100px;text-align:right;font-size:13.5px;line-height:16px;color:#222">598.23</div>
<div class="abs" style="left:1638px;top:758.8999999999999px;width:100px;text-align:right;font-size:13.5px;line-height:16px;color:#222">867.00</div>
<div class="abs" style="left:387px;top:779.3699999999999px;width:1353px;height:1px;background:#d6e1e1"></div>
<div class="abs" style="left:394px;top:791.3699999999999px;width:2px;height:2px;background:#6a78b4"></div>
<div class="abs" style="left:407px;top:785.8699999999999px;font-size:13px;line-height:16px;color:#222;white-space:nowrap">社会保险费</div>
<div class="abs" style="left:516px;top:784.6699999999998px;width:100px;text-align:right;font-size:13.5px;line-height:16px;color:#222">1,999.99</div>
<div class="abs" style="left:618px;top:784.6699999999998px;width:100px;text-align:right;font-size:13.5px;line-height:16px;color:#222">7,835.98</div>
<div class="abs" style="left:720px;top:784.6699999999998px;width:100px;text-align:right;font-size:13.5px;line-height:16px;color:#222">377.00</div>
<div class="abs" style="left:822px;top:784.6699999999998px;width:100px;text-align:right;font-size:13.5px;line-height:16px;color:#222">650.00</div>
<div class="abs" style="left:924px;top:784.6699999999998px;width:100px;text-align:right;font-size:13.5px;line-height:16px;color:#222">384.54</div>
<div class="abs" style="left:1026px;top:784.6699999999998px;width:100px;text-align:right;font-size:13.5px;line-height:16px;color:#222">663.00</div>
<div class="abs" style="left:1128px;top:784.6699999999998px;width:100px;text-align:right;font-size:13.5px;line-height:16px;color:#222">382.66</div>
<div class="abs" style="left:1230px;top:784.6699999999998px;width:100px;text-align:right;font-size:13.5px;line-height:16px;color:#222">659.75</div>
<div class="abs" style="left:1332px;top:784.6699999999998px;width:100px;text-align:right;font-size:13.5px;line-height:16px;color:#222">471.25</div>
<div class="abs" style="left:1434px;top:784.6699999999998px;width:100px;text-align:right;font-size:13.5px;line-height:16px;color:#222">812.50</div>
<div class="abs" style="left:1536px;top:784.6699999999998px;width:100px;text-align:right;font-size:13.5px;line-height:16px;color:#222">384.54</div>
<div class="abs" style="left:1638px;top:784.6699999999998px;width:100px;text-align:right;font-size:13.5px;line-height:16px;color:#222">663.00</div>
<div class="abs" style="left:387px;top:805.1399999999999px;width:1353px;height:1px;background:#d6e1e1"></div>
<div class="abs" style="left:394px;top:817.1399999999999px;width:2px;height:2px;background:#6a78b4"></div>
<div class="abs" style="left:407px;top:811.6399999999999px;font-size:13px;line-height:16px;color:#222;white-space:nowrap">养老保险</div>
<div class="abs" style="left:516px;top:810.4399999999998px;width:100px;text-align:right;font-size:13.5px;line-height:16px;color:#222">970.28</div>
<div class="abs" style="left:618px;top:810.4399999999998px;width:100px;text-align:right;font-size:13.5px;line-height:16px;color:#222">4,410.85</div>
<div class="abs" style="left:720px;top:810.4399999999998px;width:100px;text-align:right;font-size:13.5px;line-height:16px;color:#222">182.90</div>
<div class="abs" style="left:822px;top:810.4399999999998px;width:100px;text-align:right;font-size:13.5px;line-height:16px;color:#222">310.00</div>
<div class="abs" style="left:924px;top:810.4399999999998px;width:100px;text-align:right;font-size:13.5px;line-height:16px;color:#222">186.56</div>
<div class="abs" style="left:1026px;top:810.4399999999998px;width:100px;text-align:right;font-size:13.5px;line-height:16px;color:#222">316.20</div>
<div class="abs" style="left:1128px;top:810.4399999999998px;width:100px;text-align:right;font-size:13.5px;line-height:16px;color:#222">185.64</div>
<div class="abs" style="left:1230px;top:810.4399999999998px;width:100px;text-align:right;font-size:13.5px;line-height:16px;color:#222">314.65</div>
<div class="abs" style="left:1332px;top:810.4399999999998px;width:100px;text-align:right;font-size:13.5px;line-height:16px;color:#222">228.63</div>
<div class="abs" style="left:1434px;top:810.4399999999998px;width:100px;text-align:right;font-size:13.5px;line-height:16px;color:#222">387.50</div>
<div class="abs" style="left:1536px;top:810.4399999999998px;width:100px;text-align:right;font-size:13.5px;line-height:16px;color:#222">186.56</div>
<div class="abs" style="left:1638px;top:810.4399999999998px;width:100px;text-align:right;font-size:13.5px;line-height:16px;color:#222">316.20</div>
<div class="abs" style="left:387px;top:830.9100000000001px;width:1353px;height:1px;background:#d6e1e1"></div>
<div class="abs" style="left:394px;top:842.9100000000001px;width:2px;height:2px;background:#6a78b4"></div>
<div class="abs" style="left:407px;top:837.4100000000001px;font-size:13px;line-height:16px;color:#222;white-space:nowrap">医疗保险</div>
<div class="abs" style="left:516px;top:836.21px;width:100px;text-align:right;font-size:13.5px;line-height:16px;color:#222">1,195.38</div>
<div class="abs" style="left:618px;top:836.21px;width:100px;text-align:right;font-size:13.5px;line-height:16px;color:#222">3,215.14</div>
<div class="abs" style="left:720px;top:836.21px;width:100px;text-align:right;font-size:13.5px;line-height:16px;color:#222">225.33</div>
<div class="abs" style="left:822px;top:836.21px;width:100px;text-align:right;font-size:13.5px;line-height:16px;color:#222">259.00</div>
<div class="abs" style="left:924px;top:836.21px;width:100px;text-align:right;font-size:13.5px;line-height:16px;color:#222">229.84</div>
<div class="abs" style="left:1026px;top:836.21px;width:100px;text-align:right;font-size:13.5px;line-height:16px;color:#222">264.18</div>
<div class="abs" style="left:1128px;top:836.21px;width:100px;text-align:right;font-size:13.5px;line-height:16px;color:#222">228.71</div>
<div class="abs" style="left:1230px;top:836.21px;width:100px;text-align:right;font-size:13.5px;line-height:16px;color:#222">262.89</div>
<div class="abs" style="left:1332px;top:836.21px;width:100px;text-align:right;font-size:13.5px;line-height:16px;color:#222">281.66</div>
<div class="abs" style="left:1434px;top:836.21px;width:100px;text-align:right;font-size:13.5px;line-height:16px;color:#222">323.75</div>
<div class="abs" style="left:1536px;top:836.21px;width:100px;text-align:right;font-size:13.5px;line-height:16px;color:#222">229.84</div>
<div class="abs" style="left:1638px;top:836.21px;width:100px;text-align:right;font-size:13.5px;line-height:16px;color:#222">264.18</div>
<div class="abs" style="left:387px;top:856.6800000000001px;width:1353px;height:1px;background:#d6e1e1"></div>
<div class="abs" style="left:394px;top:868.6800000000001px;width:2px;height:2px;background:#6a78b4"></div>
<div class="abs" style="left:407px;top:863.1800000000001px;font-size:13px;line-height:16px;color:#222;white-space:nowrap">工伤保险</div>
<div class="abs" style="left:516px;top:861.98px;width:100px;text-align:right;font-size:13.5px;line-height:16px;color:#222">896.81</div>
<div class="abs" style="left:618px;top:861.98px;width:100px;text-align:right;font-size:13.5px;line-height:16px;color:#222">3,169.91</div>
<div class="abs" style="left:720px;top:861.98px;width:100px;text-align:right;font-size:13.5px;line-height:16px;color:#222">169.05</div>
<div class="abs" style="left:822px;top:861.98px;width:100px;text-align:right;font-size:13.5px;line-height:16px;color:#222">245.00</div>
<div class="abs" style="left:924px;top:861.98px;width:100px;text-align:right;font-size:13.5px;line-height:16px;color:#222">172.43</div>
<div class="abs" style="left:1026px;top:861.98px;width:100px;text-align:right;font-size:13.5px;line-height:16px;color:#222">249.90</div>
<div class="abs" style="left:1128px;top:861.98px;width:100px;text-align:right;font-size:13.5px;line-height:16px;color:#222">171.59</div>
<div class="abs" style="left:1230px;top:861.98px;width:100px;text-align:right;font-size:13.5px;line-height:16px;color:#222">248.68</div>
<div class="abs" style="left:1332px;top:861.98px;width:100px;text-align:right;font-size:13.5px;line-height:16px;color:#222">211.31</div>
<div class="abs" style="left:1434px;top:861.98px;width:100px;text-align:right;font-size:13.5px;line-height:16px;color:#222">306.25</div>
<div class="abs" style="left:1536px;top:861.98px;width:100px;text-align:right;font-size:13.5px;line-height:16px;color:#222">172.43</div>
<div class="abs" style="left:1638px;top:861.98px;width:100px;text-align:right;font-size:13.5px;line-height:16px;color:#222">249.90</div>
<div class="abs" style="left:387px;top:882.45px;width:1353px;height:1px;background:#d6e1e1"></div>
<div class="abs" style="left:394px;top:894.45px;width:2px;height:2px;background:#6a78b4"></div>
<div class="abs" style="left:407px;top:888.95px;font-size:13px;line-height:16px;color:#222;white-space:nowrap">失业保险</div>
<div class="abs" style="left:516px;top:887.75px;width:100px;text-align:right;font-size:13.5px;line-height:16px;color:#222">555.54</div>
<div class="abs" style="left:618px;top:887.75px;width:100px;text-align:right;font-size:13.5px;line-height:16px;color:#222">1,841.00</div>
<div class="abs" style="left:720px;top:887.75px;width:100px;text-align:right;font-size:13.5px;line-height:16px;color:#222">104.72</div>
<div class="abs" style="left:822px;top:887.75px;width:100px;text-align:right;font-size:13.5px;line-height:16px;color:#222">136.00</div>
<div class="abs" style="left:924px;top:887.75px;width:100px;text-align:right;font-size:13.5px;line-height:16px;color:#222">106.81</div>
<div class="abs" style="left:1026px;top:887.75px;width:100px;text-align:right;font-size:13.5px;line-height:16px;color:#222">138.72</div>
<div class="abs" style="left:1128px;top:887.75px;width:100px;text-align:right;font-size:13.5px;line-height:16px;color:#222">106.29</div>
<div class="abs" style="left:1230px;top:887.75px;width:100px;text-align:right;font-size:13.5px;line-height:16px;color:#222">138.04</div>
<div class="abs" style="left:1332px;top:887.75px;width:100px;text-align:right;font-size:13.5px;line-height:16px;color:#222">130.90</div>
<div class="abs" style="left:1434px;top:887.75px;width:100px;text-align:right;font-size:13.5px;line-height:16px;color:#222">170.00</div>
<div class="abs" style="left:1536px;top:887.75px;width:100px;text-align:right;font-size:13.5px;line-height:16px;color:#222">106.81</div>
<div class="abs" style="left:1638px;top:887.75px;width:100px;text-align:right;font-size:13.5px;line-height:16px;color:#222">138.72</div>
<div class="abs" style="left:387px;top:908.22px;width:1353px;height:1px;background:#d6e1e1"></div>
<div class="abs" style="left:394px;top:920.22px;width:2px;height:2px;background:#6a78b4"></div>
<div class="abs" style="left:407px;top:914.72px;font-size:13px;line-height:16px;color:#222;white-space:nowrap">生育保险</div>
<div class="abs" style="left:516px;top:913.52px;width:100px;text-align:right;font-size:13.5px;line-height:16px;color:#222">368.38</div>
<div class="abs" style="left:618px;top:913.52px;width:100px;text-align:right;font-size:13.5px;line-height:16px;color:#222">1,581.30</div>
<div class="abs" style="left:720px;top:913.52px;width:100px;text-align:right;font-size:13.5px;line-height:16px;color:#222">69.44</div>
<div class="abs" style="left:822px;top:913.52px;width:100px;text-align:right;font-size:13.5px;line-height:16px;color:#222">112.00</div>
<div class="abs" style="left:924px;top:913.52px;width:100px;text-align:right;font-size:13.5px;line-height:16px;color:#222">70.83</div>
<div class="abs" style="left:1026px;top:913.52px;width:100px;text-align:right;font-size:13.5px;line-height:16px;color:#222">114.24</div>
<div class="abs" style="left:1128px;top:913.52px;width:100px;text-align:right;font-size:13.5px;line-height:16px;color:#222">70.48</div>
<div class="abs" style="left:1230px;top:913.52px;width:100px;text-align:right;font-size:13.5px;line-height:16px;color:#222">113.68</div>
<div class="abs" style="left:1332px;top:913.52px;width:100px;text-align:right;font-size:13.5px;line-height:16px;color:#222">86.80</div>
<div class="abs" style="left:1434px;top:913.52px;width:100px;text-align:right;font-size:13.5px;line-height:16px;color:#222">140.00</div>
<div class="abs" style="left:1536px;top:913.52px;width:100px;text-align:right;font-size:13.5px;line-height:16px;color:#222">70.83</div>
<div class="abs" style="left:1638px;top:913.52px;width:100px;text-align:right;font-size:13.5px;line-height:16px;color:#222">114.24</div>
<div class="abs" style="left:387px;top:933.99px;width:1353px;height:1px;background:#d6e1e1"></div>
<div class="abs" style="left:394px;top:945.99px;width:2px;height:2px;background:#6a78b4"></div>
<div class="abs" style="left:407px;top:940.49px;font-size:13px;line-height:16px;color:#222;white-space:nowrap">其他</div>
<div class="abs" style="left:516px;top:939.29px;width:100px;text-align:right;font-size:13.5px;line-height:16px;color:#222">868.96</div>
<div class="abs" style="left:618px;top:939.29px;width:100px;text-align:right;font-size:13.5px;line-height:16px;color:#222">2,757.44</div>
<div class="abs" style="left:720px;top:939.29px;width:100px;text-align:right;font-size:13.5px;line-height:16px;color:#222">163.80</div>
<div class="abs" style="left:822px;top:939.29px;width:100px;text-align:right;font-size:13.5px;line-height:16px;color:#222">210.00</div>
<div class="abs" style="left:924px;top:939.29px;width:100px;text-align:right;font-size:13.5px;line-height:16px;color:#222">167.08</div>
<div class="abs" style="left:1026px;top:939.29px;width:100px;text-align:right;font-size:13.5px;line-height:16px;color:#222">214.20</div>
<div class="abs" style="left:1128px;top:939.29px;width:100px;text-align:right;font-size:13.5px;line-height:16px;color:#222">166.26</div>
<div class="abs" style="left:1230px;top:939.29px;width:100px;text-align:right;font-size:13.5px;line-height:16px;color:#222">213.15</div>
<div class="abs" style="left:1332px;top:939.29px;width:100px;text-align:right;font-size:13.5px;line-height:16px;color:#222">204.75</div>
<div class="abs" style="left:1434px;top:939.29px;width:100px;text-align:right;font-size:13.5px;line-height:16px;color:#222">262.50</div>
<div class="abs" style="left:1536px;top:939.29px;width:100px;text-align:right;font-size:13.5px;line-height:16px;color:#222">167.08</div>
<div class="abs" style="left:1638px;top:939.29px;width:100px;text-align:right;font-size:13.5px;line-height:16px;color:#222">214.20</div>
<div class="abs" style="left:387px;top:959.76px;width:1353px;height:1px;background:#d6e1e1"></div>
<div class="abs" style="left:394px;top:971.76px;width:2px;height:2px;background:#6a78b4"></div>
<div class="abs" style="left:407px;top:966.26px;font-size:13px;line-height:16px;color:#222;white-space:nowrap">住房费用</div>
<div class="abs" style="left:516px;top:965.06px;width:100px;text-align:right;font-size:13.5px;line-height:16px;color:#222">1,313.09</div>
<div class="abs" style="left:618px;top:965.06px;width:100px;text-align:right;font-size:13.5px;line-height:16px;color:#222">4,875.79</div>
<div class="abs" style="left:720px;top:965.06px;width:100px;text-align:right;font-size:13.5px;line-height:16px;color:#222">247.52</div>
<div class="abs" style="left:822px;top:965.06px;width:100px;text-align:right;font-size:13.5px;line-height:16px;color:#222">364.00</div>
<div class="abs" style="left:924px;top:965.06px;width:100px;text-align:right;font-size:13.5px;line-height:16px;color:#222">252.47</div>
<div class="abs" style="left:1026px;top:965.06px;width:100px;text-align:right;font-size:13.5px;line-height:16px;color:#222">371.28</div>
<div class="abs" style="left:1128px;top:965.06px;width:100px;text-align:right;font-size:13.5px;line-height:16px;color:#222">251.23</div>
<div class="abs" style="left:1230px;top:965.06px;width:100px;text-align:right;font-size:13.5px;line-height:16px;color:#222">369.46</div>
<div class="abs" style="left:1332px;top:965.06px;width:100px;text-align:right;font-size:13.5px;line-height:16px;color:#222">309.40</div>
<div class="abs" style="left:1434px;top:965.06px;width:100px;text-align:right;font-size:13.5px;line-height:16px;color:#222">455.00</div>
<div class="abs" style="left:1536px;top:965.06px;width:100px;text-align:right;font-size:13.5px;line-height:16px;color:#222">252.47</div>
<div class="abs" style="left:1638px;top:965.06px;width:100px;text-align:right;font-size:13.5px;line-height:16px;color:#222">371.28</div>
<div class="abs" style="left:387px;top:985.53px;width:1353px;height:1px;background:#d6e1e1"></div>
<div class="abs" style="left:394px;top:997.53px;width:2px;height:2px;background:#6a78b4"></div>
<div class="abs" style="left:407px;top:992.03px;font-size:13px;line-height:16px;color:#222;white-space:nowrap">住房公积金</div>
<div class="abs" style="left:516px;top:990.8299999999999px;width:100px;text-align:right;font-size:13.5px;line-height:16px;color:#222">887.33</div>
<div class="abs" style="left:618px;top:990.8299999999999px;width:100px;text-align:right;font-size:13.5px;line-height:16px;color:#222">3,437.74</div>
<div class="abs" style="left:720px;top:990.8299999999999px;width:100px;text-align:right;font-size:13.5px;line-height:16px;color:#222">156.02</div>
<div class="abs" style="left:822px;top:990.8299999999999px;width:100px;text-align:right;font-size:13.5px;line-height:16px;color:#222">269.00</div>
<div class="abs" style="left:924px;top:990.8299999999999px;width:100px;text-align:right;font-size:13.5px;line-height:16px;color:#222">159.14</div>
<div class="abs" style="left:1026px;top:990.8299999999999px;width:100px;text-align:right;font-size:13.5px;line-height:16px;color:#222">274.38</div>
<div class="abs" style="left:1128px;top:990.8299999999999px;width:100px;text-align:right;font-size:13.5px;line-height:16px;color:#222">158.36</div>
<div class="abs" style="left:1230px;top:990.8299999999999px;width:100px;text-align:right;font-size:13.5px;line-height:16px;color:#222">272.94</div>
<div class="abs" style="left:1332px;top:990.8299999999999px;width:100px;text-align:right;font-size:13.5px;line-height:16px;color:#222">195.01</div>
<div class="abs" style="left:1434px;top:990.8299999999999px;width:100px;text-align:right;font-size:13.5px;line-height:16px;color:#222">339.25</div>
<div class="abs" style="left:1536px;top:990.8299999999999px;width:100px;text-align:right;font-size:13.5px;line-height:16px;color:#222">159.14</div>
<div class="abs" style="left:1638px;top:990.8299999999999px;width:100px;text-align:right;font-size:13.5px;line-height:16px;color:#222">274.38</div>
<div class="abs" style="left:265px;top:457px;width:2px;height:2px;background:#6a78b4"></div>
<div class="abs" style="left:278px;top:450.20000000000005px;font-size:13px;line-height:16px;color:#222;white-space:nowrap">芬达北京</div>
<div class="abs" style="left:265px;top:835px;width:2px;height:2px;background:#6a78b4"></div>
<div class="abs" style="left:278px;top:828.2px;font-size:13px;line-height:16px;color:#222;white-space:nowrap">芬达杭州</div>
<div class="abs" style="left:1294.5px;top:0px;width:267px;height:20px;background:#dcedf9;border-left:2px solid #6b6f78"></div>
<div class="abs" style="left:1297px;top:2px;font-size:13px;line-height:16px;color:#a9b3bd;white-space:nowrap;-webkit-text-stroke:0">功能快捷码或菜单名称(支持拼音和首字母)</div>
<svg class="abs" style="left:1566px;top:1px" width="17" height="17" viewBox="0 0 17 17"><defs><radialGradient id="mg" cx="40%" cy="35%" r="60%"><stop offset="0" stop-color="#ffffff"/><stop offset="1" stop-color="#8fd0ee"/></radialGradient></defs><circle cx="7" cy="7" r="5.2" fill="url(#mg)" stroke="#cfe8f5" stroke-width="1"/><path d="M10.5 10.5L15 15" stroke="#2b3440" stroke-width="2.2"/></svg>
<svg class="abs" style="left:1593px;top:-4px" width="24" height="28" viewBox="0 0 24 28"><circle cx="12.7" cy="4.5" r="4.2" fill="#fff"/><circle cx="6" cy="10.4" r="3.1" fill="#fff"/><circle cx="12.4" cy="17" r="3.3" fill="#fff"/><circle cx="19" cy="23.6" r="2.1" fill="#fff"/></svg>
<div class="abs" style="left:1614px;top:-0.5px;font-size:14px;line-height:17px;color:#fff;font-weight:bold;font-style:italic;white-space:nowrap">Kingdee</div>
<div class="abs" style="left:1675px;top:2px;width:1px;height:14px;background:#a7c0da"></div>
<div class="abs" style="left:1680px;top:1px;font-size:12.5px;line-height:16px;color:#f0f4f8;white-space:nowrap;letter-spacing:-0.3px">EAS</div>
<div class="abs" style="left:1707px;top:1px;font-size:13.5px;line-height:16px;color:#fff;font-weight:bold;white-space:nowrap">限时版</div>
<svg class="abs" style="left:1px;top:31px" width="21" height="18" viewBox="0 0 21 18"><defs><linearGradient id="ag" x1="0" y1="0" x2="1" y2="1"><stop offset="0" stop-color="#c0b0ff"/><stop offset="0.5" stop-color="#a9c8f8"/><stop offset="1" stop-color="#2a48c8"/></linearGradient></defs><path d="M8 1.2L18.5 1.4L13.7 10.4Z" fill="#f4fbff"/><path d="M13.3 6L18.5 1.7L18.9 12.6L14.1 16.3Z" fill="#d5f1fb" stroke="#3a4a60" stroke-width="0.7"/><path d="M0.8 6.9H5.6L5.2 2.3L13.7 10.4H0.8Z" fill="url(#ag)"/><path d="M6 12.3H13" stroke="#c8d8e8" stroke-width="1"/></svg>
<svg class="abs" style="left:1657px;top:66px" width="8" height="13" viewBox="0 0 8 13"><path d="M7.5 0.5V12.5L0.5 6.5Z" fill="#c8d4e0" stroke="#8a96a2" stroke-width="1"/></svg>
<svg class="abs" style="left:1685px;top:66px" width="8" height="13" viewBox="0 0 8 13"><path d="M0.5 0.5V12.5L7.5 6.5Z" fill="#c8d4e0" stroke="#8a96a2" stroke-width="1"/></svg>
<svg class="abs" style="left:1710px;top:67px" width="9" height="11" viewBox="0 0 9 11"><path d="M0 1H9M0 3.5H9M0 6H9M0 8.5H9M0 10.5H9" stroke="#2a8ad8" stroke-width="1.4"/></svg>
<svg class="abs" style="left:1735px;top:67px" width="11" height="11" viewBox="0 0 11 11"><path d="M1 1L10 10M10 1L1 10" stroke="#2f86d6" stroke-width="2"/></svg>
<div class="abs" style="left:1740px;top:131px;width:11px;height:864px;background:#e9ecf1"></div>
<div class="abs" style="left:1742px;top:133px;width:6px;height:752px;background:#c3c9d3"></div>
<div class="abs" style="left:1746px;top:938px;width:7px;height:43px;background:#4f8fcd"></div>
<svg class="abs" style="left:1746px;top:952px" width="7" height="14" viewBox="0 0 7 14"><path d="M6 1L1.5 7L6 13" stroke="#cfe3f5" stroke-width="1.2" fill="none"/></svg>
<div class="abs" style="left:42.2px;top:947.7px;width:32.6px;height:24.5px;border:2px solid #3a8aa8;border-radius:2px;background:#fff"></div>
<div class="abs" style="left:80.30000000000001px;top:949px;width:29.5px;height:22px;border:1px solid #e4e4e4;border-radius:1px;background:#fff;box-shadow:0 0 1px #eee"></div>
<div class="abs" style="left:116.5px;top:949px;width:29.5px;height:22px;border:1px solid #e4e4e4;border-radius:1px;background:#fff;box-shadow:0 0 1px #eee"></div>
<div class="abs" style="left:153.3px;top:949px;width:29.5px;height:22px;border:1px solid #e4e4e4;border-radius:1px;background:#fff;box-shadow:0 0 1px #eee"></div>
<div class="abs" style="left:189.60000000000002px;top:949px;width:29.5px;height:22px;border:1px solid #e4e4e4;border-radius:1px;background:#fff;box-shadow:0 0 1px #eee"></div>
<div class="abs" style="left:43.7px;top:978px;width:29.5px;height:22px;border:1px solid #e4e4e4;border-radius:1px;background:#fff"></div>
<div class="abs" style="left:80.30000000000001px;top:978px;width:29.5px;height:22px;border:1px solid #e4e4e4;border-radius:1px;background:#fff"></div>
<div class="abs" style="left:116.5px;top:978px;width:29.5px;height:22px;border:1px solid #e4e4e4;border-radius:1px;background:#fff"></div>
<div class="abs" style="left:153.3px;top:978px;width:29.5px;height:22px;border:1px solid #e4e4e4;border-radius:1px;background:#fff"></div>
<div class="abs" style="left:189.60000000000002px;top:978px;width:29.5px;height:22px;border:1px solid #e4e4e4;border-radius:1px;background:#fff"></div>
<svg class="abs" style="left:46.5px;top:951.5px" width="24" height="17" viewBox="0 0 24 17"><rect x="0.8" y="0.8" width="22.4" height="15.4" fill="#fff" stroke="#3cb878" stroke-width="1.6"/><path d="M1.5 4.5H22.5M1.5 7.5H22.5M1.5 10.5H22.5M1.5 13.5H22.5" stroke="#bfe6cf" stroke-width="1"/><path d="M6.5 4.5V16M16 4.5V16" stroke="#d5eedf" stroke-width="1"/><rect x="1.6" y="5" width="20.8" height="2" fill="#e4f5ea"/><rect x="1.6" y="11" width="20.8" height="2" fill="#e4f5ea"/></svg>
<svg class="abs" style="left:83px;top:953px" width="24" height="15" viewBox="0 0 24 15"><rect x="1" y="10" width="3.5" height="5" fill="#3d8ef0"/><rect x="7.5" y="2" width="3.5" height="13" fill="#3d8ef0"/><rect x="13" y="8" width="3.5" height="7" fill="#3d8ef0"/><rect x="19" y="5" width="3.5" height="10" fill="#3d8ef0"/></svg>
<svg class="abs" style="left:119px;top:952px" width="24" height="16" viewBox="0 0 24 16"><rect x="1" y="10" width="3.5" height="6" fill="#1c9a48"/><rect x="7" y="6" width="3.5" height="10" fill="#76c060"/><rect x="7" y="11" width="3.5" height="5" fill="#1c9a48"/><rect x="13" y="0" width="3.5" height="16" fill="#76c060"/><rect x="13" y="7" width="3.5" height="9" fill="#1c9a48"/><rect x="19" y="6" width="3.5" height="10" fill="#76c060"/><rect x="19" y="11" width="3.5" height="5" fill="#1c9a48"/></svg>
<svg class="abs" style="left:156px;top:953px" width="25" height="15" viewBox="0 0 25 15"><path d="M1 13L7 8L11 11L16 6L19 9L24 3V15H1Z" fill="#e3edfb"/><path d="M1 13L7 8L11 11L16 6L19 9L24 3" stroke="#4b8ee8" stroke-width="1.4" fill="none"/></svg>
<svg class="abs" style="left:192px;top:952px" width="25" height="16" viewBox="0 0 25 16"><path d="M1 4C5 4 7 13 12 11S17 3 24 5" stroke="#f08a30" stroke-width="1.6" fill="none"/><path d="M1 10C6 12 8 3 12 5S18 13 24 9" stroke="#3b8ee8" stroke-width="1.4" fill="none"/></svg>
<svg class="abs" style="left:46px;top:981px" width="24" height="14" viewBox="0 0 24 14"><path d="M1 4L6 1L11 5L16 3L23 5V14H1Z" fill="#f6c646"/><path d="M1 8L6 5L11 9L16 6L23 9V14H1Z" fill="#8aa8ee"/></svg>
<svg class="abs" style="left:84px;top:980px" width="22" height="15" viewBox="0 0 22 15"><path d="M10 3A8 8 0 1 0 17 14L10 10Z" fill="#8a9ef2"/><path d="M12 1A8 8 0 0 1 19 6L12 9Z" fill="#4d90f0"/><path d="M12.5 10.5L19.5 8A8 8 0 0 1 18 15Z" fill="#2cc0c0"/></svg>
<svg class="abs" style="left:120px;top:980px" width="24" height="15" viewBox="0 0 24 15"><rect x="2" y="7" width="3" height="3" fill="#3b8ee8"/><rect x="8" y="3" width="3" height="3" fill="#2cb0b0"/><rect x="14" y="3" width="3" height="3" fill="#3b8ee8"/><rect x="19" y="1" width="3" height="3" fill="#a9c8f4"/><rect x="8" y="8" width="4" height="4" fill="#6aa8f0"/><rect x="14" y="8" width="3" height="3" fill="#2cb0b0"/><rect x="20" y="8" width="2" height="2" fill="#3b8ee8"/><rect x="3" y="13" width="3" height="2" fill="#3b8ee8"/><rect x="14" y="13" width="3" height="2" fill="#3b8ee8"/></svg>
<svg class="abs" style="left:157px;top:980px" width="24" height="15" viewBox="0 0 24 15"><rect x="1" y="1" width="7" height="11" fill="#2cb5b5"/><rect x="9" y="1" width="5" height="8" fill="#8fd6d6"/><rect x="15" y="1" width="4" height="8" fill="#a8c5f2"/><rect x="20" y="1" width="3" height="8" fill="#c8e8e8"/><rect x="9" y="10" width="14" height="2" fill="#3b8ee8"/><rect x="1" y="13" width="7" height="2" fill="#7ccfcf"/></svg>
<svg class="abs" style="left:193px;top:980px" width="24" height="15" viewBox="0 0 24 15"><g fill="#3b8ee8"><circle cx="14" cy="2" r="1"/><circle cx="9" cy="6" r="1"/><circle cx="19" cy="5" r="1"/><circle cx="5" cy="11" r="1"/><circle cx="13" cy="9" r="1"/></g><g fill="#f08a30"><circle cx="20" cy="10" r="1"/><circle cx="16" cy="12" r="1"/><circle cx="9" cy="13" r="1"/><circle cx="22" cy="13" r="1"/><circle cx="3" cy="14" r="1"/></g></svg>
</div>
</body></html>
